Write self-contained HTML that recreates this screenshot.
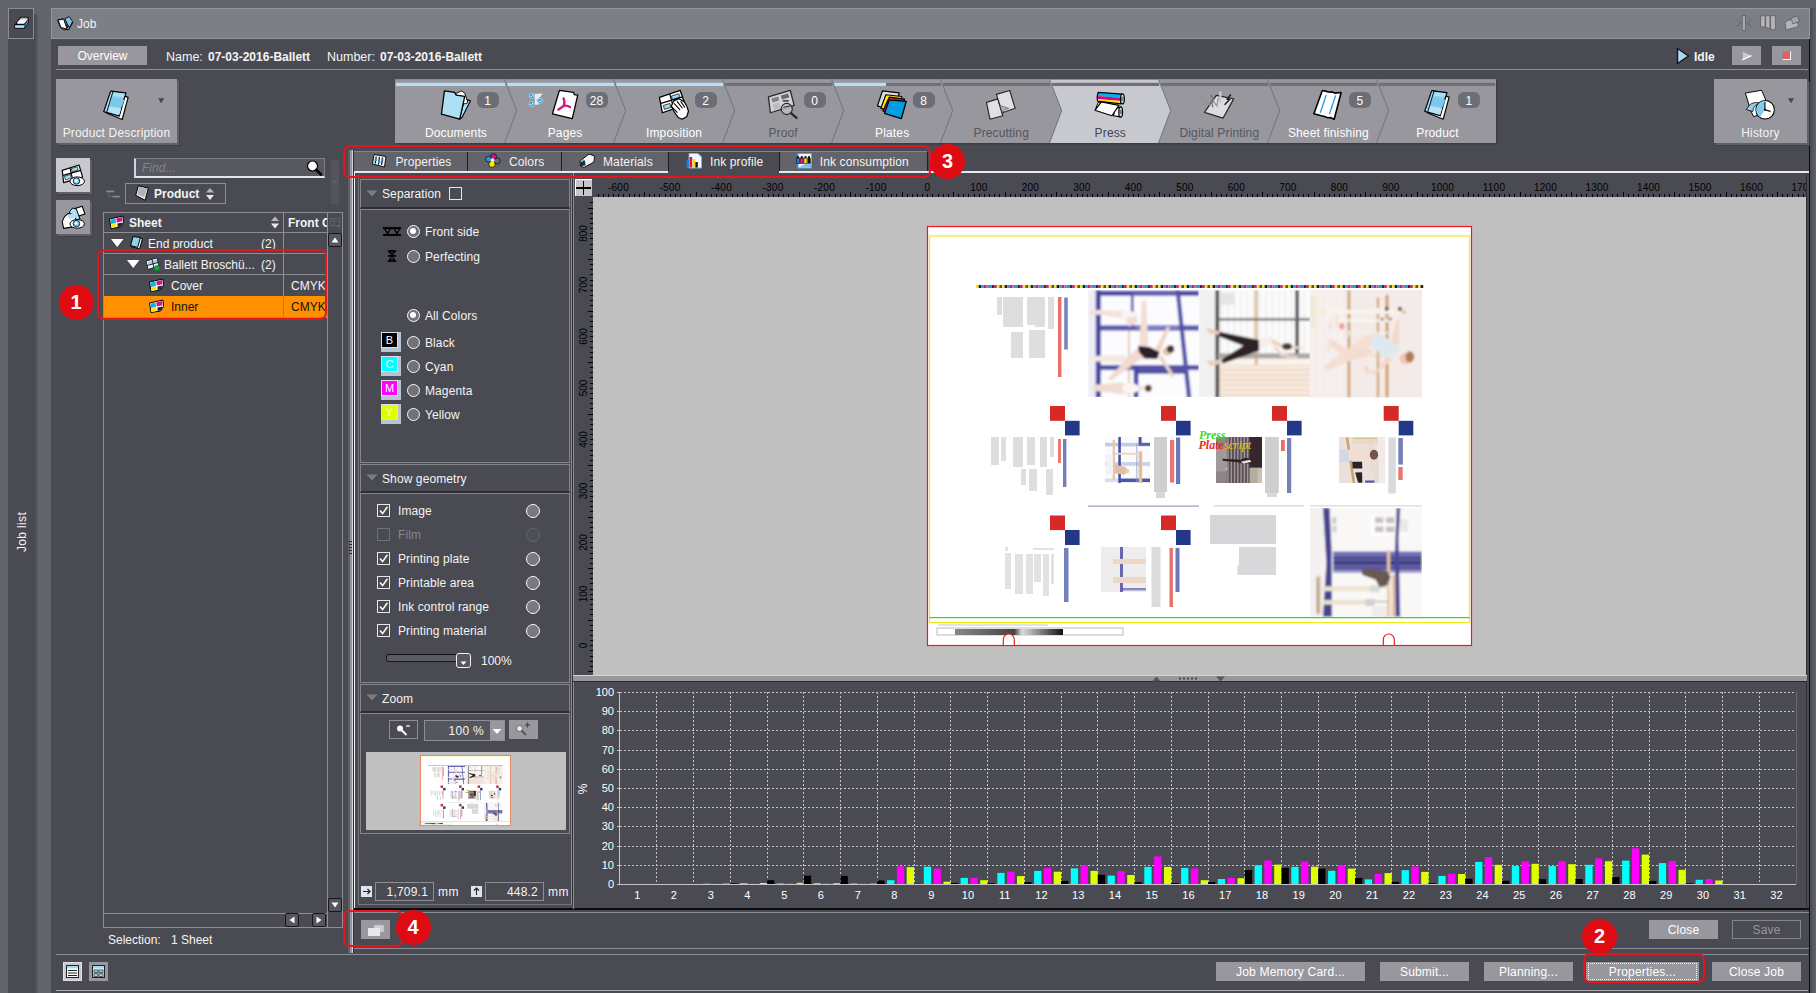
<!DOCTYPE html><html><head><meta charset="utf-8"><title>Job</title><style>
*{box-sizing:border-box;margin:0;padding:0}
html,body{width:1816px;height:993px;overflow:hidden;background:#62636b;font-family:"Liberation Sans",sans-serif;font-size:12px;color:#f4f4f4}
.a{position:absolute}
.t{position:absolute;white-space:nowrap;line-height:14px}
.btn{position:absolute;background:#97979d;color:#fff;text-align:center;white-space:nowrap}
.hl{position:absolute;height:1px;background:#8d8e95}
.vl{position:absolute;width:1px;background:#8d8e95}
.b{font-weight:bold}
.red{position:absolute;border:2px solid #e8141c;border-radius:7px}
.num{position:absolute;width:35px;height:35px;border-radius:18px;background:#e00a12;color:#fff;font-weight:bold;font-size:20px;line-height:35px;text-align:center}
.rad{position:absolute;width:13.4px;height:13.4px;border-radius:7px;border:1.7px solid #fafafa;background:#71727a}
.rad.on:after{content:"";position:absolute;left:2.3px;top:2.3px;width:5.4px;height:5.4px;border-radius:3px;background:#fff}
.cb{position:absolute;width:13px;height:13px;border:1px solid #e8e8ea;background:#4a4a53}
.circ{position:absolute;width:14px;height:14px;border-radius:7px;border:1.7px solid #fafafa;background:#777880}
.hdr{position:absolute;background:#4a4a53;border:1px solid #8d8e95;border-bottom:2px solid #33333a}
.pnl{position:absolute;border:1px solid #8d8e95}
.sh{box-shadow:2px 2px 0 0 #5f6068, 3px 3px 0 0 #3f3f46}
</style></head><body>
<div class="a" style="left:8px;top:8px;width:26px;height:985px;background:#4a4a53"></div>
<div class="a" style="left:34px;top:14px;width:5px;height:979px;background:linear-gradient(90deg,#45464e,#62636b)"></div>
<div class="a" style="left:8px;top:8px;width:26px;height:31px;border:1px solid #8d8e95"></div>
<div class="a" style="left:15px;top:551.5px;width:0;height:0"><div style="position:absolute;left:0;top:0;transform:rotate(-90deg);transform-origin:0 0;white-space:nowrap;line-height:14px;letter-spacing:.35px">Job list</div></div>
<div class="a" style="left:51px;top:8px;width:1759px;height:985px;background:#4a4a53"></div>
<div class="a" style="left:51px;top:8px;width:1759px;height:31px;background:#7d7f87;border:1px solid #96979e"></div>
<div class="a" style="left:1809px;top:39px;width:1.5px;height:954px;background:#0c0c0e"></div>
<div class="a" style="left:1810px;top:8px;width:6px;height:985px;background:linear-gradient(90deg,#4a4b52,#62636b)"></div>
<div class="t" style="left:77px;top:17px">Job</div>
<div class="btn" style="left:58px;top:46px;width:89px;height:19px;line-height:21px">Overview</div>
<div class="t" style="left:166px;top:50px;font-size:12.5px">Name:</div><div class="t b" style="left:208px;top:50px">07-03-2016-Ballett</div>
<div class="t" style="left:327px;top:50px;font-size:12.5px">Number:</div><div class="t b" style="left:380px;top:50px">07-03-2016-Ballett</div>
<div class="hl" style="left:56px;top:69px;width:1752px"></div>
<svg class="a" style="left:1676px;top:47px" width="14" height="18"><path d="M1.5 1.5 L12.5 9 L1.5 16.5 Z" fill="#a8d8f0" stroke="#111" stroke-width="1.3"/></svg>
<div class="t b" style="left:1694px;top:50px">Idle</div>
<div class="btn" style="left:1732px;top:46px;width:29px;height:19px"></div>
<svg class="a" style="left:1741px;top:50px" width="12" height="12"><path d="M1.8 1.8 L10.2 5.6 L1.8 9.6 Z" fill="#c4c8dc"/><path d="M1.2 10 L10.4 5.6" stroke="#fff" stroke-width="1.2"/></svg>
<div class="btn" style="left:1772px;top:46px;width:29px;height:19px"></div>
<div class="a" style="left:1782px;top:51px;width:9px;height:9px;background:#e06064;border-top:1px solid #8a8b92;border-left:1px solid #8a8b92;border-right:1px solid #fff;border-bottom:1px solid #fff"></div>
<div class="a" style="left:395px;top:79px;width:1100.5px;height:64px;background:#97979d;box-shadow:1.5px 1.5px 0 0 #3c3d44"></div>
<div class="a" style="left:395px;top:79px;width:1101px;height:1px;background:#8a8d96"></div>
<svg class="a" style="left:0;top:0" width="1816" height="170" viewBox="0 0 1816 170"><polygon points="1049.7,80 1061.7,110.5 1049.7,143 1158.7,143 1170.7,110.5 1158.7,80" fill="#c8c9ce"/><rect x="396" y="82.8" width="109.2" height="3.2" fill="#b4e0f5"/><rect x="507.2" y="82.8" width="107" height="3.2" fill="#b4e0f5"/><rect x="616.2" y="82.8" width="107" height="3.2" fill="#b4e0f5"/><rect x="725.2" y="82.8" width="107" height="3.2" fill="#707178"/><rect x="834.2" y="82.8" width="107" height="3.2" fill="#b4e0f5"/><rect x="886" y="82.8" width="55.2" height="3.2" fill="#707178"/><rect x="943.2" y="82.8" width="107" height="3.2" fill="#707178"/><rect x="1052.2" y="82.8" width="107" height="3.2" fill="#707178"/><rect x="1161.2" y="82.8" width="107" height="3.2" fill="#707178"/><rect x="1270.2" y="82.8" width="107" height="3.2" fill="#707178"/><rect x="1379.2" y="82.8" width="115.8" height="3.2" fill="#707178"/><polyline points="504.5,79.5 516.7,110.5 504.5,143" fill="none" stroke="#6a7584" stroke-width="1"/><polyline points="613.5,79.5 625.7,110.5 613.5,143" fill="none" stroke="#6a7584" stroke-width="1"/><polyline points="722.5,79.5 734.7,110.5 722.5,143" fill="none" stroke="#6a7584" stroke-width="1"/><polyline points="831.5,79.5 843.7,110.5 831.5,143" fill="none" stroke="#6a7584" stroke-width="1"/><polyline points="940.5,79.5 952.7,110.5 940.5,143" fill="none" stroke="#6a7584" stroke-width="1"/><polyline points="1049.5,79.5 1061.7,110.5 1049.5,143" fill="none" stroke="#6a7584" stroke-width="1"/><polyline points="1158.5,79.5 1170.7,110.5 1158.5,143" fill="none" stroke="#6a7584" stroke-width="1"/><polyline points="1267.5,79.5 1279.7,110.5 1267.5,143" fill="none" stroke="#6a7584" stroke-width="1"/><polyline points="1376.5,79.5 1388.7,110.5 1376.5,143" fill="none" stroke="#6a7584" stroke-width="1"/><g transform="translate(435 86) scale(0.099108)"><polygon points="300,130 358,150 272,318 245,335" fill="#aee0f5" stroke="#000" stroke-width="11" stroke-linejoin="round" /><polygon points="205,78 268,50 300,72 332,168 300,182" fill="#fff" stroke="#000" stroke-width="9" stroke-linejoin="round" /><polygon points="95,50 198,64 214,92 300,105 250,335 65,285" fill="#aee0f5" stroke="#000" stroke-width="13" stroke-linejoin="round" /><polygon points="1005,80 1085,75 1052,122 1022,142 1052,186 1008,190" fill="#e4f0f8" stroke="none" stroke-width="0" stroke-linejoin="round" /><circle cx="975" cy="100" r="25" fill="#1f9ae0" stroke="#d8ecf8" stroke-width="6"/><polyline points="963,100 972,110 988,88" fill="none" stroke="#fff" stroke-width="9"/><circle cx="1062" cy="150" r="25" fill="#1f9ae0" stroke="#d8ecf8" stroke-width="6"/><polyline points="1050,150 1059,160 1075,138" fill="none" stroke="#fff" stroke-width="9"/><circle cx="975" cy="182" r="25" fill="#1f9ae0" stroke="#d8ecf8" stroke-width="6"/><polyline points="963,182 972,192 988,170" fill="none" stroke="#fff" stroke-width="9"/><polygon points="1255,45 1398,64 1404,86 1440,92 1385,330 1185,280" fill="#fff" stroke="#000" stroke-width="13" stroke-linejoin="round" /><path d="M1300 200 C1310 170 1305 140 1298 125 M1300 200 C1280 215 1260 228 1245 238 M1300 200 C1325 195 1345 200 1362 212" fill="none" stroke="#d4148c" stroke-width="24" stroke-linecap="round"/></g><g transform="translate(650 86) scale(0.099108)"><polygon points="95,115 305,45 355,190 125,270" fill="#fff" stroke="#000" stroke-width="13" stroke-linejoin="round" /><polygon points="215,102 290,78 302,112 226,136" fill="#9ddcf5" stroke="#000" stroke-width="7" stroke-linejoin="round" /><polygon points="135,196 202,176 212,216 146,236" fill="#9ddcf5" stroke="#000" stroke-width="7" stroke-linejoin="round" /><polyline points="200,82 240,230" fill="none" stroke="#000" stroke-width="12"/><polyline points="110,175 330,110" fill="none" stroke="#000" stroke-width="12"/><path d="M215 205 L240 150 L292 128 L345 158 L372 205 L388 255 L372 308 L325 335 L285 318 L245 262 Z" fill="#fff" stroke="#000" stroke-width="12" stroke-linejoin="round"/><path d="M225 215 L275 265 M245 178 L300 238 M275 158 L325 222 M312 158 L350 215" fill="none" stroke="#000" stroke-width="11" stroke-linecap="round"/><polygon points="1195,110 1415,45 1455,195 1215,270" fill="#d4d4d7" stroke="#2a2a2e" stroke-width="13" stroke-linejoin="round" /><polygon points="1225,126 1295,106 1304,146 1236,166" fill="#808086" stroke="none" stroke-width="0" stroke-linejoin="round" /><polygon points="1320,96 1395,76 1405,116 1330,136" fill="#6a6a70" stroke="none" stroke-width="0" stroke-linejoin="round" /><polygon points="1238,185 1305,165 1315,225 1250,245" fill="#bcbcc0" stroke="none" stroke-width="0" stroke-linejoin="round" /><line x1="1420" y1="272" x2="1478" y2="322" stroke="#2a2a2e" stroke-width="24" stroke-linecap="round"/><circle cx="1380" cy="232" r="56" fill="#c4c4c8" fill-opacity="0.75" stroke="#2a2a2e" stroke-width="12"/><line x1="1345" y1="215" x2="1415" y2="200" stroke="#2a2a2e" stroke-width="10"/><line x1="1340" y1="150" x2="1400" y2="150" stroke="#2a2a2e" stroke-width="14"/></g><g transform="translate(870 86) scale(0.099108)"><polygon points="125,50 295,70 252,262 75,200" fill="#dcdcde" stroke="#000" stroke-width="12" stroke-linejoin="round" /><polygon points="160,88 322,106 285,282 110,226" fill="#ffee00" stroke="#000" stroke-width="12" stroke-linejoin="round" /><polygon points="195,112 348,132 310,302 130,252" fill="#d4148c" stroke="#000" stroke-width="12" stroke-linejoin="round" /><polygon points="195,140 365,156 316,330 146,276" fill="#00a0e0" stroke="#000" stroke-width="13" stroke-linejoin="round" /><polygon points="1175,165 1290,130 1340,300 1210,335" fill="#e0e0e3" stroke="#2a2a2e" stroke-width="12" stroke-linejoin="round" /><polygon points="1275,85 1410,45 1465,225 1335,270" fill="#e0e0e3" stroke="#2a2a2e" stroke-width="12" stroke-linejoin="round" /><polygon points="1312,198 1400,226 1355,240 1338,272" fill="#b8b8bc" stroke="#444" stroke-width="6" stroke-linejoin="round" /></g><g transform="translate(1085 86) scale(0.099108)"><polygon points="300,232 358,212 358,312 288,300" fill="#fff" stroke="#000" stroke-width="12" stroke-linejoin="round" /><ellipse cx="360" cy="262" rx="19" ry="52" fill="#bfe4f5" stroke="#000" stroke-width="12"/><ellipse cx="360" cy="262" rx="6" ry="20" fill="#fff" stroke="#000" stroke-width="6"/><polygon points="132,168 165,158 135,215 108,228" fill="#fff" stroke="#000" stroke-width="10" stroke-linejoin="round" /><polygon points="165,160 342,196 272,300 100,245" fill="#fff" stroke="#000" stroke-width="12" stroke-linejoin="round" /><polygon points="132,66 372,84 368,122 126,100" fill="#00b4f0" stroke="none" stroke-width="0" stroke-linejoin="round" /><polygon points="126,100 368,122 364,152 122,130" fill="#e0008c" stroke="none" stroke-width="0" stroke-linejoin="round" /><polygon points="122,130 364,152 360,178 128,152" fill="#ffe800" stroke="none" stroke-width="0" stroke-linejoin="round" /><path d="M132 64 L376 82 L362 180 L126 152 Q116 108 132 64 Z" fill="none" stroke="#000" stroke-width="12" stroke-linejoin="round"/><ellipse cx="378" cy="130" rx="19" ry="50" fill="#bfe4f5" stroke="#000" stroke-width="12"/><ellipse cx="378" cy="130" rx="6" ry="20" fill="#fff" stroke="#000" stroke-width="6"/><polygon points="1325,95 1500,130 1392,325 1205,265" fill="#dcdcdf" stroke="#2a2a2e" stroke-width="13" stroke-linejoin="round" /><polygon points="1350,55 1382,55 1372,175 1360,175" fill="#c4c4c8" stroke="none" stroke-width="0" stroke-linejoin="round" /><polyline points="1268,85 1295,140 1275,150 1290,215" fill="none" stroke="#77777d" stroke-width="14"/><polyline points="1205,155 1260,190 1300,160 1330,200 1345,120" fill="none" stroke="#909096" stroke-width="12"/><polyline points="1472,85 1435,132 1458,138 1408,190" fill="none" stroke="#1e1e22" stroke-width="15"/></g><g transform="translate(1300 86) scale(0.099108)"><polygon points="225,45 262,52 285,60 330,62 350,72 415,65 345,335 305,318 280,320 240,305 215,300 140,280" fill="#fff" stroke="#000" stroke-width="16" stroke-linejoin="round" /><line x1="265" y1="90" x2="205" y2="270" stroke="#1a9be0" stroke-width="13"/><line x1="360" y1="95" x2="296" y2="285" stroke="#1a9be0" stroke-width="13"/><polygon points="1345,60 1505,112 1445,335 1290,272" fill="#fff" stroke="#000" stroke-width="12" stroke-linejoin="round" /><polygon points="1330,48 1482,66 1415,300 1260,255" fill="#86cdee" stroke="#000" stroke-width="13" stroke-linejoin="round" /><polygon points="1343,120 1466,138 1440,215 1318,196" fill="#7ac8ec" stroke="none" stroke-width="0" stroke-linejoin="round" /><polygon points="1360,62 1472,74 1462,112 1350,98" fill="#aadff5" stroke="none" stroke-width="0" stroke-linejoin="round" /><polygon points="1316,205 1436,225 1415,290 1296,258" fill="#b4e3f7" stroke="none" stroke-width="0" stroke-linejoin="round" /><polygon points="1330,48 1352,52 1288,263 1260,255" fill="#a4daf3" stroke="#000" stroke-width="9" stroke-linejoin="round" /></g></svg>
<div class="t" style="left:386px;top:126px;width:140px;text-align:center;color:#fff;letter-spacing:.15px">Documents</div>
<div class="a" style="left:476.5px;top:92px;width:22px;height:16px;border-radius:6px;background:#6d6e75;color:#fff;text-align:center;line-height:18px">1</div>
<div class="t" style="left:495.05px;top:126px;width:140px;text-align:center;color:#fff;letter-spacing:.15px">Pages</div>
<div class="a" style="left:585.55px;top:92px;width:22px;height:16px;border-radius:6px;background:#6d6e75;color:#fff;text-align:center;line-height:18px">28</div>
<div class="t" style="left:604.1px;top:126px;width:140px;text-align:center;color:#fff;letter-spacing:.15px">Imposition</div>
<div class="a" style="left:694.6px;top:92px;width:22px;height:16px;border-radius:6px;background:#6d6e75;color:#fff;text-align:center;line-height:18px">2</div>
<div class="t" style="left:713.15px;top:126px;width:140px;text-align:center;color:#55565e;letter-spacing:.15px">Proof</div>
<div class="a" style="left:803.65px;top:92px;width:22px;height:16px;border-radius:6px;background:#6d6e75;color:#fff;text-align:center;line-height:18px">0</div>
<div class="t" style="left:822.2px;top:126px;width:140px;text-align:center;color:#fff;letter-spacing:.15px">Plates</div>
<div class="a" style="left:912.7px;top:92px;width:22px;height:16px;border-radius:6px;background:#6d6e75;color:#fff;text-align:center;line-height:18px">8</div>
<div class="t" style="left:931.25px;top:126px;width:140px;text-align:center;color:#55565e;letter-spacing:.15px">Precutting</div>
<div class="t" style="left:1040.3px;top:126px;width:140px;text-align:center;color:#45464e;letter-spacing:.15px">Press</div>
<div class="t" style="left:1149.35px;top:126px;width:140px;text-align:center;color:#55565e;letter-spacing:.15px">Digital Printing</div>
<div class="t" style="left:1258.4px;top:126px;width:140px;text-align:center;color:#fff;letter-spacing:.15px">Sheet finishing</div>
<div class="a" style="left:1348.9px;top:92px;width:22px;height:16px;border-radius:6px;background:#6d6e75;color:#fff;text-align:center;line-height:18px">5</div>
<div class="t" style="left:1367.45px;top:126px;width:140px;text-align:center;color:#fff;letter-spacing:.15px">Product</div>
<div class="a" style="left:1457.95px;top:92px;width:22px;height:16px;border-radius:6px;background:#6d6e75;color:#fff;text-align:center;line-height:18px">1</div>
<div class="a sh" style="left:56px;top:79px;width:121px;height:64px;background:#97979d"></div>
<div class="t" style="left:56px;top:126px;width:121px;text-align:center;letter-spacing:.15px">Product Description</div>
<svg class="a" style="left:0;top:70px" width="400" height="80" viewBox="0 70 400 80"><g transform="translate(-1321 0.3)"><g transform="translate(1300 86) scale(0.099108)"><polygon points="1345,60 1505,112 1445,335 1290,272" fill="#fff" stroke="#000" stroke-width="12" stroke-linejoin="round" /><polygon points="1330,48 1482,66 1415,300 1260,255" fill="#86cdee" stroke="#000" stroke-width="13" stroke-linejoin="round" /><polygon points="1343,120 1466,138 1440,215 1318,196" fill="#7ac8ec" stroke="none" stroke-width="0" stroke-linejoin="round" /><polygon points="1360,62 1472,74 1462,112 1350,98" fill="#aadff5" stroke="none" stroke-width="0" stroke-linejoin="round" /><polygon points="1316,205 1436,225 1415,290 1296,258" fill="#b4e3f7" stroke="none" stroke-width="0" stroke-linejoin="round" /><polygon points="1330,48 1352,52 1288,263 1260,255" fill="#a4daf3" stroke="#000" stroke-width="9" stroke-linejoin="round" /></g></g><polygon points="158,98.3 164.4,98.3 161.2,103.2" fill="#45464e"/></svg>
<div class="a sh" style="left:1714px;top:79px;width:93px;height:64px;background:#97979d"></div>
<div class="t" style="left:1714px;top:126px;width:93px;text-align:center;letter-spacing:.15px">History</div>
<div class="a sh" style="left:56px;top:158px;width:34px;height:34px;background:#c8c9ce"></div>
<div class="a sh" style="left:56px;top:200px;width:34px;height:34px;background:#97979d"></div>
<svg class="a" style="left:0;top:150px" width="360" height="180" viewBox="0 150 360 180"><g transform="translate(50 150) scale(0.0906372)"><polygon points="135,225 320,165 360,300 150,360" fill="#fff" stroke="#000" stroke-width="13" stroke-linejoin="round" /><polygon points="235,205 300,185 310,220 245,240" fill="#9ddcf5" stroke="#000" stroke-width="7" stroke-linejoin="round" /><polygon points="160,290 225,270 235,310 170,330" fill="#9ddcf5" stroke="#000" stroke-width="7" stroke-linejoin="round" /><line x1="220" y1="195" x2="252" y2="335" stroke="#000" stroke-width="12"/><line x1="145" y1="280" x2="340" y2="225" stroke="#000" stroke-width="12"/><ellipse cx="300" cy="345" rx="80" ry="48" fill="#fff" stroke="#000" stroke-width="11"/><circle cx="292" cy="342" r="36" fill="#7fd0f0" stroke="#000" stroke-width="9"/><circle cx="288" cy="338" r="14" fill="#fff"/><polygon points="245,655 355,620 385,705 280,740" fill="#fff" stroke="#000" stroke-width="12" stroke-linejoin="round" /><polygon points="215,680 250,640 290,650 330,760 240,790" fill="#aee0f5" stroke="#000" stroke-width="11" stroke-linejoin="round" /><polygon points="160,735 200,700 270,715 310,840 150,865 135,790" fill="#fff" stroke="#000" stroke-width="12" stroke-linejoin="round" /><polygon points="190,725 275,690 300,745 215,760" fill="#aee0f5" stroke="none" stroke-width="0" stroke-linejoin="round" /><ellipse cx="300" cy="815" rx="80" ry="48" fill="#fff" stroke="#000" stroke-width="11"/><circle cx="292" cy="812" r="36" fill="#7fd0f0" stroke="#000" stroke-width="9"/><circle cx="288" cy="808" r="14" fill="#fff"/><rect x="620" y="448" width="88" height="18" fill="#8a8b92"/><rect x="690" y="505" width="82" height="18" fill="#8a8b92"/><polyline points="645,470 645,512 685,512" fill="none" stroke="#6a6b72" stroke-width="9"/><polygon points="975,395 1085,420 1050,555 945,500" fill="#e8e8ea" stroke="#000" stroke-width="11" stroke-linejoin="round" /><polygon points="985,405 1070,425 1040,520 965,490" fill="#b4b4b8" stroke="none" stroke-width="0" stroke-linejoin="round" /></g></svg>
<div class="a" style="left:134px;top:158px;width:191px;height:20px;background:#575860;border:1px solid #7d7e86;border-left:2px solid #c9d6ea;border-bottom:2px solid #dfe6f2"></div>
<div class="t" style="left:142px;top:161px;color:#83848b;font-style:italic;font-size:12px">Find...</div>
<svg class="a" style="left:304px;top:159px" width="20" height="18"><circle cx="8.5" cy="7" r="5" fill="#fff" stroke="#000" stroke-width="1.2"/><line x1="12.5" y1="11" x2="17" y2="15.5" stroke="#000" stroke-width="2.6" stroke-linecap="round"/></svg>
<div class="a" style="left:331px;top:160px;width:8px;height:44px;background:#53545c"></div>
<div class="a" style="left:333px;top:181px;width:5px;height:1px;border-top:1px dotted #70717a"></div>
<div class="a" style="left:125px;top:183px;width:101px;height:21px;border:1px solid #8d8e95"></div>
<div class="t b" style="left:154px;top:187px">Product</div>
<svg class="a" style="left:204px;top:187px" width="12" height="14"><polygon points="2,5.5 10,5.5 6,1" fill="#b8b8bc"/><polygon points="2,8 10,8 6,13" fill="#e8e8ea"/></svg>
<div class="a" style="left:103px;top:212px;width:240px;height:716px;border:1px solid #8d8e95"></div>
<div class="hl" style="left:104px;top:232px;width:223px"></div>
<div class="hl" style="left:104px;top:253px;width:223px"></div>
<div class="hl" style="left:104px;top:274px;width:223px"></div>

<div class="a" style="left:104px;top:295.5px;width:223px;height:21px;background:#ff9000"></div>
<div class="hl" style="left:104px;top:316.5px;width:223px"></div>
<div class="vl" style="left:283px;top:213px;height:104px"></div>
<div class="vl" style="left:327px;top:213px;height:714px"></div>
<div class="a" style="left:283px;top:297px;width:1px;height:20px;background:#c87810"></div>
<div class="t b" style="left:129px;top:216px">Sheet</div>
<div class="t b" style="left:288px;top:216px;width:39px;overflow:hidden">Front C</div>
<svg class="a" style="left:269px;top:215px" width="12" height="15"><polygon points="2,6 10,6 6,1.5" fill="#b8b8bc"/><polygon points="2,8.5 10,8.5 6,13.5" fill="#e8e8ea"/></svg>
<div class="t" style="left:148px;top:237px">End product</div><div class="t" style="left:261px;top:237px">(2)</div>
<div class="t" style="left:164px;top:258px">Ballett Brosch&uuml;...</div><div class="t" style="left:261px;top:258px">(2)</div>
<div class="t" style="left:171px;top:279px">Cover</div><div class="t" style="left:291px;top:279px;width:36px;overflow:hidden">CMYK</div>
<div class="t" style="left:171px;top:300px;color:#111">Inner</div><div class="t" style="left:291px;top:300px;width:36px;overflow:hidden;color:#111">CMYK</div>
<svg class="a" style="left:0;top:205px" width="360" height="125" viewBox="0 205 360 125"><g transform="translate(108.5 215.5)"><polygon points="1,3.5 14.5,0.5 15,7 12,11.5 2.5,13" fill="#fff" stroke="#000" stroke-width="1"/><polygon points="2,4.2 7,3.1 7.5,7.5 2.5,8.4" fill="#10b0f0"/><polygon points="7.8,2.9 13.6,1.6 13.9,5.8 8.3,7" fill="#d4148c"/><polygon points="2.6,9 7.6,8 8,11.6 3,12.4" fill="#ffe800"/><polygon points="9,8 14.4,7 11.8,11 9.2,11.4" fill="#222"/></g><g transform="translate(148.5 278.5)"><polygon points="1,3.5 14.5,0.5 15,7 12,11.5 2.5,13" fill="#fff" stroke="#000" stroke-width="1"/><polygon points="2,4.2 7,3.1 7.5,7.5 2.5,8.4" fill="#10b0f0"/><polygon points="7.8,2.9 13.6,1.6 13.9,5.8 8.3,7" fill="#d4148c"/><polygon points="2.6,9 7.6,8 8,11.6 3,12.4" fill="#ffe800"/><polygon points="9,8 14.4,7 11.8,11 9.2,11.4" fill="#222"/></g><g transform="translate(148.5 299.5)"><polygon points="1,3.5 14.5,0.5 15,7 12,11.5 2.5,13" fill="#fff" stroke="#000" stroke-width="1"/><polygon points="2,4.2 7,3.1 7.5,7.5 2.5,8.4" fill="#10b0f0"/><polygon points="7.8,2.9 13.6,1.6 13.9,5.8 8.3,7" fill="#d4148c"/><polygon points="2.6,9 7.6,8 8,11.6 3,12.4" fill="#ffe800"/><polygon points="9,8 14.4,7 11.8,11 9.2,11.4" fill="#222"/></g><polygon points="111,239 123.5,239 117.2,247" fill="#fff"/><polygon points="127,260 139.5,260 133.2,268" fill="#fff"/><g transform="translate(130 236)"><polygon points="4,1 12.5,2.5 9.5,13 1,10.5" fill="#fff" stroke="#000" stroke-width="1"/><polygon points="3,0.5 10.5,1.5 7.6,11.5 0.6,9.5" fill="#8fd0ee" stroke="#000" stroke-width="1"/></g><g transform="translate(145 257)"><polygon points="1,4 12,0.8 14,9 3,12.5" fill="#e8f4fa" stroke="#222" stroke-width="1"/><polygon points="3,5 6.5,4 7.2,6.6 3.7,7.6" fill="#8fd0ee"/><polygon points="8,3.4 11.4,2.4 12,5 8.7,6" fill="#8fd0ee"/><line x1="2" y1="8.5" x2="13" y2="5.5" stroke="#222" stroke-width="1"/><line x1="7" y1="2.5" x2="9" y2="11" stroke="#222" stroke-width="1"/><circle cx="12" cy="11" r="2.6" fill="#1fa040" stroke="#083" stroke-width=".6"/></g></svg>
<div class="a" style="left:328px;top:213px;width:14px;height:19px"></div>
<svg class="a" style="left:329px;top:217px" width="13" height="12"><rect x="1.5" y="1.5" width="9" height="7" fill="none" stroke="#60616a" stroke-width="1"/><line x1="1.5" y1="4" x2="10.5" y2="4" stroke="#60616a"/><line x1="5" y1="1.5" x2="5" y2="8.5" stroke="#60616a"/><polygon points="7,8 12,8 9.5,11" fill="#60616a"/></svg>
<div class="a" style="left:328px;top:233px;width:14px;height:14px;background:#55565e;border:1px solid #17171b;border-radius:2px"></div><svg class="a" style="left:328px;top:233px" width="14" height="14"><polygon points="3.5,9.5 10.5,9.5 7,4.5" fill="#fff"/></svg>
<div class="a" style="left:328px;top:898px;width:14px;height:14px;background:#55565e;border:1px solid #17171b;border-radius:2px"></div><svg class="a" style="left:328px;top:898px" width="14" height="14"><polygon points="3.5,4.5 10.5,4.5 7,9.5" fill="#fff"/></svg>
<div class="hl" style="left:104px;top:913px;width:223px"></div>
<div class="a" style="left:285px;top:913px;width:14px;height:14px;background:#55565e;border:1px solid #17171b;border-radius:2px"></div><svg class="a" style="left:285px;top:913px" width="14" height="14"><polygon points="9.5,3.5 9.5,10.5 4.5,7" fill="#fff"/></svg>
<div class="a" style="left:312px;top:913px;width:14px;height:14px;background:#55565e;border:1px solid #17171b;border-radius:2px"></div><svg class="a" style="left:312px;top:913px" width="14" height="14"><polygon points="4.5,3.5 4.5,10.5 9.5,7" fill="#fff"/></svg>
<div class="t" style="left:108px;top:933px">Selection:</div><div class="t" style="left:171px;top:933px">1 Sheet</div>
<div class="a" style="left:348px;top:150px;width:2px;height:803px;background:#5c5d65"></div>
<div class="a" style="left:350px;top:150px;width:2px;height:803px;background:#94959b"></div>
<div class="a" style="left:352px;top:150px;width:1px;height:803px;background:#d4d4d8"></div>
<div class="a" style="left:353px;top:150px;width:1px;height:803px;background:#2e2e34"></div>
<div class="a" style="left:349px;top:541px;width:3px;height:1px;background:#2a2a30"></div>
<div class="a" style="left:349px;top:544px;width:3px;height:1px;background:#2a2a30"></div>
<div class="a" style="left:349px;top:547px;width:3px;height:1px;background:#2a2a30"></div>
<div class="a" style="left:349px;top:550px;width:3px;height:1px;background:#2a2a30"></div>
<div class="a" style="left:349px;top:553px;width:3px;height:1px;background:#2a2a30"></div>
<div class="a" style="left:354px;top:151px;width:573px;height:21px;background:#62636b;border-top:1px solid #85868d"></div>
<div class="a" style="left:354px;top:171px;width:1455px;height:2px;background:#e9e9ec"></div>
<div class="a" style="left:668px;top:151px;width:111px;height:23px;background:#4a4a53;border-top:1px solid #85868d"></div>
<div class="a" style="left:467px;top:152px;width:1px;height:19px;background:#1d1d22"></div>
<div class="a" style="left:561px;top:152px;width:1px;height:19px;background:#1d1d22"></div>
<div class="a" style="left:668px;top:152px;width:1px;height:19px;background:#1d1d22"></div>
<div class="a" style="left:779px;top:152px;width:1px;height:19px;background:#1d1d22"></div>
<div class="a" style="left:927px;top:152px;width:1px;height:19px;background:#1d1d22"></div>
<div class="t" style="left:395.5px;top:155px;letter-spacing:.12px">Properties</div>
<div class="t" style="left:509px;top:155px;letter-spacing:.12px">Colors</div>
<div class="t" style="left:603px;top:155px;letter-spacing:.12px">Materials</div>
<div class="t" style="left:710px;top:155px;letter-spacing:.12px">Ink profile</div>
<div class="t" style="left:819.7px;top:155px;letter-spacing:.12px">Ink consumption</div>
<svg class="a" style="left:340px;top:140px" width="620" height="60" viewBox="340 140 620 60"><g transform="translate(372 153)"><polygon points="2,1.5 14,3.5 12.5,14 0.5,11" fill="#f4f4f4" stroke="#111" stroke-width="1"/><line x1="4.2" y1="3.5" x2="3.2" y2="10.5" stroke="#111" stroke-width="1.2"/><line x1="7.4" y1="4" x2="6.4" y2="11.5" stroke="#111" stroke-width="1.2"/><line x1="10.6" y1="4.6" x2="9.6" y2="12" stroke="#111" stroke-width="1.2"/><rect x="2.6" y="6" width="2.4" height="2" fill="#1f9ae0"/><rect x="5.9" y="8" width="2.4" height="2" fill="#1f9ae0"/><rect x="9" y="5.6" width="2.4" height="2" fill="#1f9ae0"/></g><g transform="translate(485 153)"><circle cx="8.5" cy="3.6" r="3" fill="#d4148c" stroke="#111" stroke-width=".8"/><circle cx="3.6" cy="6.2" r="3" fill="#1f9ae0" stroke="#111" stroke-width=".8"/><circle cx="12.2" cy="8" r="3" fill="#6a6a70" stroke="#111" stroke-width=".8"/><circle cx="7" cy="11.2" r="3.2" fill="#ffe800" stroke="#111" stroke-width=".8"/><circle cx="7.6" cy="7.2" r="2" fill="#e8e8ea"/></g><g transform="translate(579 153)"><polygon points="1,8 10,1 15.5,3 15,9 5,14.5 1.5,13" fill="#f4f4f4" stroke="#111" stroke-width="1"/><polygon points="1.5,9 6,7.5 6.5,12.5 2,13" fill="#2a2a2e"/><line x1="3" y1="6.5" x2="6" y2="8" stroke="#1f9ae0" stroke-width="1.3"/></g><g transform="translate(686 153)"><polygon points="3,0.5 12,0.5 15.5,4 15.5,15 3,15" fill="#f4f8fc" stroke="#7ab8e8" stroke-width="1"/><rect x="0.5" y="7" width="2.6" height="7.5" fill="#1f7ae0"/><rect x="3.6" y="4" width="2.6" height="10.5" fill="#e0104a"/><rect x="6.7" y="6" width="2.6" height="8.5" fill="#ffd800"/><rect x="9.4" y="9" width="2.4" height="5.5" fill="#111"/></g><g transform="translate(796 153)"><rect x="2" y="0.5" width="13.5" height="14.5" fill="#e8f4fc" stroke="#5aa8e8" stroke-width="1"/><polygon points="2.5,14.5 15,8 15,14.5" fill="#7ac0f0"/><rect x="0.5" y="5" width="3.2" height="5.5" fill="#1f7ae0" stroke="#111" stroke-width=".6"/><rect x="4.2" y="5" width="3.2" height="5.5" fill="#e010a0" stroke="#111" stroke-width=".6"/><rect x="7.9" y="5" width="3.2" height="5.5" fill="#ffe000" stroke="#111" stroke-width=".6"/><rect x="11.6" y="5" width="3" height="5.5" fill="#111"/><rect x="1" y="3.2" width="2" height="2" fill="#111"/><rect x="4.8" y="3.2" width="2" height="2" fill="#111"/><rect x="8.5" y="3.2" width="2" height="2" fill="#111"/><rect x="12" y="3.2" width="2" height="2" fill="#111"/></g></svg>
<div class="a" style="left:358px;top:175px;width:214px;height:730px;border-left:1px solid #75767d;border-right:1px solid #8d8e95;border-bottom:1px solid #75767d"></div>
<div class="a" style="left:354px;top:173px;width:1px;height:736px;background:#f0f0f2"></div>
<div class="a" style="left:354px;top:908px;width:1455px;height:1.5px;background:#0c0c0e"></div>
<div class="a" style="left:572px;top:175px;width:1px;height:730px;background:#2e2e34"></div>
<div class="a" style="left:360px;top:179px;width:210px;height:30px;border:1px solid #85868d;border-bottom:2px solid #2c2c32"></div>
<svg class="a" style="left:366px;top:190px" width="12" height="8"><polygon points="0.5,0.5 11.5,0.5 6,6.5" fill="#7b7c84"/></svg>
<div class="t" style="left:382px;top:187px;letter-spacing:.1px">Separation</div>
<div class="cb" style="left:449px;top:187px"></div>
<div class="a" style="left:360px;top:209px;width:210px;height:254px;border:1px solid #85868d"></div>
<svg class="a" style="left:370px;top:215px" width="110" height="55" viewBox="370 215 110 55"><g transform="translate(370 215) scale(0.0605694)"><g fill="#020203"><rect x="215" y="200" width="297" height="36"/><rect x="215" y="314" width="297" height="32"/><polygon points="232,235 345,235 302,300 276,300"/><polygon points="390,235 500,235 457,300 431,300"/><rect x="274" y="290" width="32" height="30"/><rect x="429" y="290" width="32" height="30"/><rect x="295" y="580" width="137" height="30"/><rect x="295" y="662" width="137" height="28"/><rect x="295" y="745" width="137" height="30"/><polygon points="305,610 422,610 376,665 351,665"/><polygon points="351,690 376,690 422,745 305,745"/></g><polygon points="264,242 313,242 289,272" fill="#85868d"/><polygon points="420,242 470,242 445,272" fill="#85868d"/><polygon points="346,730 381,730 364,706" fill="#85868d"/><polygon points="340,614 388,614 364,642" fill="#3a3a40"/></g></svg>
<div class="rad on" style="left:407px;top:225px"></div>
<div class="t" style="left:425px;top:224.5px;letter-spacing:.1px">Front side</div>
<div class="rad" style="left:407px;top:250px"></div>
<div class="t" style="left:425px;top:249.5px;letter-spacing:.1px">Perfecting</div>
<div class="rad on" style="left:407px;top:309px"></div>
<div class="t" style="left:425px;top:308.5px;letter-spacing:.1px">All Colors</div>
<div class="rad" style="left:407px;top:336px"></div>
<div class="t" style="left:425px;top:335.5px;letter-spacing:.1px">Black</div>
<div class="rad" style="left:407px;top:360px"></div>
<div class="t" style="left:425px;top:359.5px;letter-spacing:.1px">Cyan</div>
<div class="rad" style="left:407px;top:384px"></div>
<div class="t" style="left:425px;top:383.5px;letter-spacing:.1px">Magenta</div>
<div class="rad" style="left:407px;top:408px"></div>
<div class="t" style="left:425px;top:407.5px;letter-spacing:.1px">Yellow</div>
<div class="a" style="left:381px;top:332px;width:20px;height:20px;background:#b9c3d6"></div>
<div class="a" style="left:381px;top:332px;width:17px;height:16px;background:#000;border:1px solid #d9dfec;color:#fff;font-size:11px;line-height:14px;text-align:center">B</div>
<div class="a" style="left:381px;top:356px;width:20px;height:20px;background:#b9c3d6"></div>
<div class="a" style="left:381px;top:356px;width:17px;height:16px;background:#00ffff;border:1px solid #d9dfec;color:#e8ffff;font-size:11px;line-height:14px;text-align:center">C</div>
<div class="a" style="left:381px;top:380px;width:20px;height:20px;background:#b9c3d6"></div>
<div class="a" style="left:381px;top:380px;width:17px;height:16px;background:#ff00ff;border:1px solid #d9dfec;color:#fff;font-size:11px;line-height:14px;text-align:center">M</div>
<div class="a" style="left:381px;top:404px;width:20px;height:20px;background:#b9c3d6"></div>
<div class="a" style="left:381px;top:404px;width:17px;height:16px;background:#dfff00;border:1px solid #d9dfec;color:#f8ffd0;font-size:11px;line-height:14px;text-align:center">Y</div>
<div class="a" style="left:360px;top:464px;width:210px;height:29px;border:1px solid #85868d;border-bottom:2px solid #2c2c32"></div>
<svg class="a" style="left:366px;top:474px" width="12" height="8"><polygon points="0.5,0.5 11.5,0.5 6,6.5" fill="#7b7c84"/></svg>
<div class="t" style="left:382px;top:472px;letter-spacing:.1px">Show geometry</div>
<div class="a" style="left:360px;top:493px;width:210px;height:190px;border:1px solid #85868d"></div>
<div class="cb" style="left:377px;top:504px;border-color:#e8e8ea"></div>
<svg class="a" style="left:377px;top:504px" width="13" height="13"><polyline points="3,6.5 5.6,9.6 10.4,2.8" fill="none" stroke="#fff" stroke-width="1.5"/></svg>
<div class="t" style="left:398px;top:503.5px;letter-spacing:.1px;color:#f4f4f4">Image</div>
<div class="circ" style="left:525.5px;top:503.5px"></div>
<div class="cb" style="left:377px;top:528px;border-color:#707179"></div>
<div class="t" style="left:398px;top:527.5px;letter-spacing:.1px;color:#85868d">Film</div>
<div class="circ" style="left:525.5px;top:527.5px;background:#4d4e56;border-color:#65666e"></div>
<div class="cb" style="left:377px;top:552px;border-color:#e8e8ea"></div>
<svg class="a" style="left:377px;top:552px" width="13" height="13"><polyline points="3,6.5 5.6,9.6 10.4,2.8" fill="none" stroke="#fff" stroke-width="1.5"/></svg>
<div class="t" style="left:398px;top:551.5px;letter-spacing:.1px;color:#f4f4f4">Printing plate</div>
<div class="circ" style="left:525.5px;top:551.5px"></div>
<div class="cb" style="left:377px;top:576px;border-color:#e8e8ea"></div>
<svg class="a" style="left:377px;top:576px" width="13" height="13"><polyline points="3,6.5 5.6,9.6 10.4,2.8" fill="none" stroke="#fff" stroke-width="1.5"/></svg>
<div class="t" style="left:398px;top:575.5px;letter-spacing:.1px;color:#f4f4f4">Printable area</div>
<div class="circ" style="left:525.5px;top:575.5px"></div>
<div class="cb" style="left:377px;top:600px;border-color:#e8e8ea"></div>
<svg class="a" style="left:377px;top:600px" width="13" height="13"><polyline points="3,6.5 5.6,9.6 10.4,2.8" fill="none" stroke="#fff" stroke-width="1.5"/></svg>
<div class="t" style="left:398px;top:599.5px;letter-spacing:.1px;color:#f4f4f4">Ink control range</div>
<div class="circ" style="left:525.5px;top:599.5px"></div>
<div class="cb" style="left:377px;top:624px;border-color:#e8e8ea"></div>
<svg class="a" style="left:377px;top:624px" width="13" height="13"><polyline points="3,6.5 5.6,9.6 10.4,2.8" fill="none" stroke="#fff" stroke-width="1.5"/></svg>
<div class="t" style="left:398px;top:623.5px;letter-spacing:.1px;color:#f4f4f4">Printing material</div>
<div class="circ" style="left:525.5px;top:623.5px"></div>
<div class="a" style="left:386px;top:654px;width:72px;height:8px;background:#5a5b63;border:1px solid #1a1a1e;border-radius:3px;border-top-color:#111"></div>
<div class="a" style="left:456px;top:653px;width:15px;height:15px;background:#55565e;border:1.5px solid #f2f2f2;border-radius:3px"></div>
<svg class="a" style="left:456px;top:653px" width="15" height="15"><polygon points="4.5,8.5 10.5,8.5 7.5,12" fill="#fff"/></svg>
<div class="t" style="left:481px;top:654px">100%</div>
<div class="a" style="left:360px;top:684px;width:210px;height:29px;border:1px solid #85868d;border-bottom:2px solid #2c2c32"></div>
<svg class="a" style="left:366px;top:694px" width="12" height="8"><polygon points="0.5,0.5 11.5,0.5 6,6.5" fill="#7b7c84"/></svg>
<div class="t" style="left:382px;top:692px;letter-spacing:.1px">Zoom</div>
<div class="a" style="left:360px;top:713px;width:210px;height:121px;border:1px solid #85868d"></div>
<div class="a" style="left:389px;top:720px;width:29px;height:19px;border:1px solid #8d8e95"></div>
<svg class="a" style="left:389px;top:720.5px" width="29" height="18"><circle cx="11" cy="7.5" r="3" fill="#fff"/><line x1="13" y1="9.5" x2="17.5" y2="14" stroke="#fff" stroke-width="2"/><line x1="17" y1="5" x2="21" y2="5" stroke="#fff" stroke-width="1.2"/></svg>
<div class="a" style="left:424px;top:720px;width:81px;height:21px;border:1px solid #8d8e95;background:#55565e"></div>
<div class="t" style="left:426px;top:724px;width:58px;text-align:right;letter-spacing:.3px">100 %</div>
<div class="a" style="left:490px;top:721px;width:14px;height:19px;background:#97979d"></div>
<svg class="a" style="left:490px;top:721px" width="14" height="19"><polygon points="2.5,8 11.5,8 7,13" fill="#fff"/></svg>
<div class="a" style="left:509px;top:720px;width:29px;height:19px;background:#97979d"></div>
<svg class="a" style="left:509px;top:720px" width="29" height="19"><circle cx="10.5" cy="8.5" r="3" fill="#e8e8ea" stroke="#55565e" stroke-width=".8"/><line x1="12.5" y1="10.5" x2="17" y2="15" stroke="#55565e" stroke-width="2"/><line x1="16" y1="5" x2="21" y2="5" stroke="#44454d" stroke-width="1.2"/><line x1="18.5" y1="2.5" x2="18.5" y2="7.5" stroke="#44454d" stroke-width="1.2"/></svg>
<div class="a" style="left:366px;top:752px;width:200px;height:78px;background:#c0c0c0"></div>
<div class="a" id="thumb" style="left:420px;top:755px;width:90px;height:70px;background:#fff;border:1px solid #e86a50;overflow:hidden"></div>
<div class="a" style="left:361px;top:886px;width:11px;height:11px;background:#dfe3ee"></div>
<svg class="a" style="left:361px;top:886px" width="11" height="11"><path d="M2 5.5 H9 M6.5 3 L9 5.5 L6.5 8" fill="none" stroke="#222" stroke-width="1.1"/></svg>
<div class="a" style="left:375px;top:882px;width:59px;height:19px;border:1px solid #8d8e95"></div>
<div class="t" style="left:377px;top:885px;width:51px;text-align:right;letter-spacing:.2px">1,709.1</div>
<div class="t" style="left:438px;top:885px;letter-spacing:.4px">mm</div>
<div class="a" style="left:471px;top:886px;width:11px;height:11px;background:#dfe3ee"></div>
<svg class="a" style="left:471px;top:886px" width="11" height="11"><path d="M5.5 9 V2 M3 4.5 L5.5 2 L8 4.5" fill="none" stroke="#222" stroke-width="1.1"/></svg>
<div class="a" style="left:485px;top:882px;width:59px;height:19px;border:1px solid #8d8e95"></div>
<div class="t" style="left:487px;top:885px;width:51px;text-align:right;letter-spacing:.2px">448.2</div>
<div class="t" style="left:548px;top:885px;letter-spacing:.4px">mm</div>
<div class="hl" style="left:354px;top:912px;width:1455px"></div>
<div class="hl" style="left:354px;top:948px;width:1455px"></div>
<div class="a" style="left:361px;top:920px;width:29px;height:19px;background:#97979d"></div>
<svg class="a" style="left:361px;top:920px" width="29" height="19"><rect x="13" y="5" width="10" height="7" fill="#c8d0e0" stroke="#a9aab0" stroke-width=".6"/><rect x="7" y="8" width="12" height="8" fill="#e8e8ea"/></svg>
<div class="btn" style="left:1649px;top:920px;width:69px;height:19px;line-height:21px;letter-spacing:.2px">Close</div>
<div class="a" style="left:1732px;top:920px;width:69px;height:19px;line-height:19px;border:1px solid #85868d;color:#96979d;text-align:center;letter-spacing:.2px">Save</div>
<div class="hl" style="left:56px;top:954px;width:1752px"></div>
<div class="hl" style="left:56px;top:990px;width:1752px;background:#a9aab0"></div>
<div class="btn" style="left:1216px;top:962px;width:149px;height:19px;line-height:21px;letter-spacing:.2px">Job Memory Card...</div>
<div class="btn" style="left:1380px;top:962px;width:89px;height:19px;line-height:21px;letter-spacing:.2px">Submit...</div>
<div class="btn" style="left:1484px;top:962px;width:89px;height:19px;line-height:21px;letter-spacing:.2px">Planning...</div>
<div class="btn" style="left:1586px;top:962px;width:113px;height:19px;line-height:21px;letter-spacing:.2px">Properties...</div>
<div class="btn" style="left:1712px;top:962px;width:89px;height:19px;line-height:21px;letter-spacing:.2px">Close Job</div>
<div class="a" style="left:1588px;top:963px;width:109px;height:17px;border:1px dotted #fff"></div>
<div class="a" style="left:63px;top:962px;width:19px;height:19px;background:#c8c9ce;border:1px solid #e0e0e4"></div>
<svg class="a" style="left:63px;top:962px" width="19" height="19"><rect x="3.5" y="3.5" width="12" height="12" fill="#fff" stroke="#222" stroke-width="1"/><rect x="4" y="4" width="11" height="2.4" fill="#9ddcf5"/><line x1="5" y1="8.5" x2="14" y2="8.5" stroke="#222"/><line x1="5" y1="11" x2="14" y2="11" stroke="#222"/><line x1="5" y1="13.5" x2="14" y2="13.5" stroke="#222"/></svg>
<div class="a" style="left:89px;top:962px;width:19px;height:19px;background:#97979d"></div>
<svg class="a" style="left:89px;top:962px" width="19" height="19"><rect x="3.5" y="3.5" width="12" height="12" fill="#e8eef2" stroke="#222" stroke-width="1"/><rect x="4" y="4" width="11" height="2.4" fill="#9ddcf5"/><rect x="5" y="8" width="4" height="2.6" fill="#9ddcf5" stroke="#222" stroke-width=".7"/><rect x="10" y="8" width="4" height="2.6" fill="#9ddcf5" stroke="#222" stroke-width=".7"/><rect x="5" y="11.8" width="4" height="2.6" fill="#9ddcf5" stroke="#222" stroke-width=".7"/><rect x="10" y="11.8" width="4" height="2.6" fill="#9ddcf5" stroke="#222" stroke-width=".7"/></svg>
<div class="a" style="left:573px;top:173px;width:1px;height:503px;background:#8d8e95"></div>
<div class="a" style="left:593px;top:197px;width:1213px;height:478px;background:#c0c0c0"></div>
<div class="a" style="left:1806px;top:173px;width:1px;height:503px;background:#2e2e34"></div>
<div class="a" style="left:575px;top:179px;width:17px;height:17px;background:#c6c6c8;border-left:1px solid #fff;border-top:1px solid #fff"></div>
<div class="a" style="left:583px;top:181px;width:1.3px;height:14px;background:#000"></div><div class="a" style="left:576px;top:187.4px;width:15px;height:1.3px;background:#000"></div>
<svg class="a" style="left:574px;top:173px" width="1232" height="503" viewBox="574 173 1232 503" font-family="Liberation Sans, sans-serif" font-size="10"><defs><clipPath id="hr"><rect x="593" y="173" width="1213" height="24"/></clipPath><clipPath id="vr"><rect x="574" y="197" width="19" height="479"/></clipPath><clipPath id="cv"><rect x="593" y="197" width="1213" height="478"/></clipPath></defs><g clip-path="url(#hr)"><path d="M598.0 194.4 V197 M603.0 194.4 V197 M608.0 194.4 V197 M613.5 194.4 V197 M618.5 194 V197 M623.5 194.4 V197 M629.0 194.4 V197 M634.0 194.4 V197 M639.0 194.4 V197 M644.0 191.5 V197 M649.5 194.4 V197 M654.5 194.4 V197 M659.5 194.4 V197 M665.0 194.4 V197 M670.0 194 V197 M675.0 194.4 V197 M680.5 194.4 V197 M685.5 194.4 V197 M690.5 194.4 V197 M696.0 191.5 V197 M701.0 194.4 V197 M706.0 194.4 V197 M711.0 194.4 V197 M716.5 194.4 V197 M721.5 194 V197 M726.5 194.4 V197 M732.0 194.4 V197 M737.0 194.4 V197 M742.0 194.4 V197 M747.0 191.5 V197 M752.5 194.4 V197 M757.5 194.4 V197 M762.5 194.4 V197 M768.0 194.4 V197 M773.0 194 V197 M778.0 194.4 V197 M783.5 194.4 V197 M788.5 194.4 V197 M793.5 194.4 V197 M799.0 191.5 V197 M804.0 194.4 V197 M809.0 194.4 V197 M814.0 194.4 V197 M819.5 194.4 V197 M824.5 194 V197 M829.5 194.4 V197 M835.0 194.4 V197 M840.0 194.4 V197 M845.0 194.4 V197 M850.0 191.5 V197 M855.5 194.4 V197 M860.5 194.4 V197 M865.5 194.4 V197 M871.0 194.4 V197 M876.0 194 V197 M881.0 194.4 V197 M886.5 194.4 V197 M891.5 194.4 V197 M896.5 194.4 V197 M902.0 191.5 V197 M907.0 194.4 V197 M912.0 194.4 V197 M917.0 194.4 V197 M922.5 194.4 V197 M927.5 194 V197 M932.5 194.4 V197 M938.0 194.4 V197 M943.0 194.4 V197 M948.0 194.4 V197 M953.0 191.5 V197 M958.5 194.4 V197 M963.5 194.4 V197 M968.5 194.4 V197 M974.0 194.4 V197 M979.0 194 V197 M984.0 194.4 V197 M989.5 194.4 V197 M994.5 194.4 V197 M999.5 194.4 V197 M1005.0 191.5 V197 M1010.0 194.4 V197 M1015.0 194.4 V197 M1020.0 194.4 V197 M1025.5 194.4 V197 M1030.5 194 V197 M1035.5 194.4 V197 M1041.0 194.4 V197 M1046.0 194.4 V197 M1051.0 194.4 V197 M1056.0 191.5 V197 M1061.5 194.4 V197 M1066.5 194.4 V197 M1071.5 194.4 V197 M1077.0 194.4 V197 M1082.0 194 V197 M1087.0 194.4 V197 M1092.5 194.4 V197 M1097.5 194.4 V197 M1102.5 194.4 V197 M1108.0 191.5 V197 M1113.0 194.4 V197 M1118.0 194.4 V197 M1123.0 194.4 V197 M1128.5 194.4 V197 M1133.5 194 V197 M1138.5 194.4 V197 M1144.0 194.4 V197 M1149.0 194.4 V197 M1154.0 194.4 V197 M1159.0 191.5 V197 M1164.5 194.4 V197 M1169.5 194.4 V197 M1174.5 194.4 V197 M1180.0 194.4 V197 M1185.0 194 V197 M1190.0 194.4 V197 M1195.5 194.4 V197 M1200.5 194.4 V197 M1205.5 194.4 V197 M1211.0 191.5 V197 M1216.0 194.4 V197 M1221.0 194.4 V197 M1226.0 194.4 V197 M1231.5 194.4 V197 M1236.5 194 V197 M1241.5 194.4 V197 M1247.0 194.4 V197 M1252.0 194.4 V197 M1257.0 194.4 V197 M1262.0 191.5 V197 M1267.5 194.4 V197 M1272.5 194.4 V197 M1277.5 194.4 V197 M1283.0 194.4 V197 M1288.0 194 V197 M1293.0 194.4 V197 M1298.5 194.4 V197 M1303.5 194.4 V197 M1308.5 194.4 V197 M1314.0 191.5 V197 M1319.0 194.4 V197 M1324.0 194.4 V197 M1329.0 194.4 V197 M1334.5 194.4 V197 M1339.5 194 V197 M1344.5 194.4 V197 M1350.0 194.4 V197 M1355.0 194.4 V197 M1360.0 194.4 V197 M1365.0 191.5 V197 M1370.5 194.4 V197 M1375.5 194.4 V197 M1380.5 194.4 V197 M1386.0 194.4 V197 M1391.0 194 V197 M1396.0 194.4 V197 M1401.5 194.4 V197 M1406.5 194.4 V197 M1411.5 194.4 V197 M1417.0 191.5 V197 M1422.0 194.4 V197 M1427.0 194.4 V197 M1432.0 194.4 V197 M1437.5 194.4 V197 M1442.5 194 V197 M1447.5 194.4 V197 M1453.0 194.4 V197 M1458.0 194.4 V197 M1463.0 194.4 V197 M1468.0 191.5 V197 M1473.5 194.4 V197 M1478.5 194.4 V197 M1483.5 194.4 V197 M1489.0 194.4 V197 M1494.0 194 V197 M1499.0 194.4 V197 M1504.5 194.4 V197 M1509.5 194.4 V197 M1514.5 194.4 V197 M1520.0 191.5 V197 M1525.0 194.4 V197 M1530.0 194.4 V197 M1535.0 194.4 V197 M1540.5 194.4 V197 M1545.5 194 V197 M1550.5 194.4 V197 M1556.0 194.4 V197 M1561.0 194.4 V197 M1566.0 194.4 V197 M1571.0 191.5 V197 M1576.5 194.4 V197 M1581.5 194.4 V197 M1586.5 194.4 V197 M1592.0 194.4 V197 M1597.0 194 V197 M1602.0 194.4 V197 M1607.5 194.4 V197 M1612.5 194.4 V197 M1617.5 194.4 V197 M1623.0 191.5 V197 M1628.0 194.4 V197 M1633.0 194.4 V197 M1638.0 194.4 V197 M1643.5 194.4 V197 M1648.5 194 V197 M1653.5 194.4 V197 M1659.0 194.4 V197 M1664.0 194.4 V197 M1669.0 194.4 V197 M1674.0 191.5 V197 M1679.5 194.4 V197 M1684.5 194.4 V197 M1689.5 194.4 V197 M1695.0 194.4 V197 M1700.0 194 V197 M1705.0 194.4 V197 M1710.5 194.4 V197 M1715.5 194.4 V197 M1720.5 194.4 V197 M1726.0 191.5 V197 M1731.0 194.4 V197 M1736.0 194.4 V197 M1741.0 194.4 V197 M1746.5 194.4 V197 M1751.5 194 V197 M1756.5 194.4 V197 M1762.0 194.4 V197 M1767.0 194.4 V197 M1772.0 194.4 V197 M1777.0 191.5 V197 M1782.5 194.4 V197 M1787.5 194.4 V197 M1792.5 194.4 V197 M1798.0 194.4 V197 M1803.0 194 V197 " stroke="#000" stroke-width="1" fill="none" shape-rendering="crispEdges"/><text x="618.5" y="191.3" text-anchor="middle" fill="#000" letter-spacing=".2">-600</text><text x="670.0" y="191.3" text-anchor="middle" fill="#000" letter-spacing=".2">-500</text><text x="721.5" y="191.3" text-anchor="middle" fill="#000" letter-spacing=".2">-400</text><text x="773.0" y="191.3" text-anchor="middle" fill="#000" letter-spacing=".2">-300</text><text x="824.5" y="191.3" text-anchor="middle" fill="#000" letter-spacing=".2">-200</text><text x="876.0" y="191.3" text-anchor="middle" fill="#000" letter-spacing=".2">-100</text><text x="927.5" y="191.3" text-anchor="middle" fill="#000" letter-spacing=".2">0</text><text x="979.0" y="191.3" text-anchor="middle" fill="#000" letter-spacing=".2">100</text><text x="1030.5" y="191.3" text-anchor="middle" fill="#000" letter-spacing=".2">200</text><text x="1082.0" y="191.3" text-anchor="middle" fill="#000" letter-spacing=".2">300</text><text x="1133.5" y="191.3" text-anchor="middle" fill="#000" letter-spacing=".2">400</text><text x="1185.0" y="191.3" text-anchor="middle" fill="#000" letter-spacing=".2">500</text><text x="1236.5" y="191.3" text-anchor="middle" fill="#000" letter-spacing=".2">600</text><text x="1288.0" y="191.3" text-anchor="middle" fill="#000" letter-spacing=".2">700</text><text x="1339.5" y="191.3" text-anchor="middle" fill="#000" letter-spacing=".2">800</text><text x="1391.0" y="191.3" text-anchor="middle" fill="#000" letter-spacing=".2">900</text><text x="1442.5" y="191.3" text-anchor="middle" fill="#000" letter-spacing=".2">1000</text><text x="1494.0" y="191.3" text-anchor="middle" fill="#000" letter-spacing=".2">1100</text><text x="1545.5" y="191.3" text-anchor="middle" fill="#000" letter-spacing=".2">1200</text><text x="1597.0" y="191.3" text-anchor="middle" fill="#000" letter-spacing=".2">1300</text><text x="1648.5" y="191.3" text-anchor="middle" fill="#000" letter-spacing=".2">1400</text><text x="1700.0" y="191.3" text-anchor="middle" fill="#000" letter-spacing=".2">1500</text><text x="1751.5" y="191.3" text-anchor="middle" fill="#000" letter-spacing=".2">1600</text><text x="1803.0" y="191.3" text-anchor="middle" fill="#000" letter-spacing=".2">1700</text></g><g clip-path="url(#vr)"><path d="M587.5 671.0 H593 M590.4 666.0 H593 M590.4 661.0 H593 M590.4 656.0 H593 M590.4 650.5 H593 M590 645.5 H593 M590.4 640.5 H593 M590.4 635.0 H593 M590.4 630.0 H593 M590.4 625.0 H593 M587.5 620.0 H593 M590.4 614.5 H593 M590.4 609.5 H593 M590.4 604.5 H593 M590.4 599.0 H593 M590 594.0 H593 M590.4 589.0 H593 M590.4 583.5 H593 M590.4 578.5 H593 M590.4 573.5 H593 M587.5 568.0 H593 M590.4 563.0 H593 M590.4 558.0 H593 M590.4 553.0 H593 M590.4 547.5 H593 M590 542.5 H593 M590.4 537.5 H593 M590.4 532.0 H593 M590.4 527.0 H593 M590.4 522.0 H593 M587.5 517.0 H593 M590.4 511.5 H593 M590.4 506.5 H593 M590.4 501.5 H593 M590.4 496.0 H593 M590 491.0 H593 M590.4 486.0 H593 M590.4 480.5 H593 M590.4 475.5 H593 M590.4 470.5 H593 M587.5 465.0 H593 M590.4 460.0 H593 M590.4 455.0 H593 M590.4 450.0 H593 M590.4 444.5 H593 M590 439.5 H593 M590.4 434.5 H593 M590.4 429.0 H593 M590.4 424.0 H593 M590.4 419.0 H593 M587.5 414.0 H593 M590.4 408.5 H593 M590.4 403.5 H593 M590.4 398.5 H593 M590.4 393.0 H593 M590 388.0 H593 M590.4 383.0 H593 M590.4 377.5 H593 M590.4 372.5 H593 M590.4 367.5 H593 M587.5 362.0 H593 M590.4 357.0 H593 M590.4 352.0 H593 M590.4 347.0 H593 M590.4 341.5 H593 M590 336.5 H593 M590.4 331.5 H593 M590.4 326.0 H593 M590.4 321.0 H593 M590.4 316.0 H593 M587.5 311.0 H593 M590.4 305.5 H593 M590.4 300.5 H593 M590.4 295.5 H593 M590.4 290.0 H593 M590 285.0 H593 M590.4 280.0 H593 M590.4 274.5 H593 M590.4 269.5 H593 M590.4 264.5 H593 M587.5 259.0 H593 M590.4 254.0 H593 M590.4 249.0 H593 M590.4 244.0 H593 M590.4 238.5 H593 M590 233.5 H593 M590.4 228.5 H593 M590.4 223.0 H593 M590.4 218.0 H593 M590.4 213.0 H593 M587.5 208.0 H593 M590.4 202.5 H593 " stroke="#000" stroke-width="1" fill="none" shape-rendering="crispEdges"/><text transform="translate(586.5 645.5) rotate(-90)" text-anchor="middle" fill="#000">0</text><text transform="translate(586.5 594.0) rotate(-90)" text-anchor="middle" fill="#000">100</text><text transform="translate(586.5 542.5) rotate(-90)" text-anchor="middle" fill="#000">200</text><text transform="translate(586.5 491.0) rotate(-90)" text-anchor="middle" fill="#000">300</text><text transform="translate(586.5 439.5) rotate(-90)" text-anchor="middle" fill="#000">400</text><text transform="translate(586.5 388.0) rotate(-90)" text-anchor="middle" fill="#000">500</text><text transform="translate(586.5 336.5) rotate(-90)" text-anchor="middle" fill="#000">600</text><text transform="translate(586.5 285.0) rotate(-90)" text-anchor="middle" fill="#000">700</text><text transform="translate(586.5 233.5) rotate(-90)" text-anchor="middle" fill="#000">800</text></g><g clip-path="url(#cv)"><filter id="bl" x="-5%" y="-5%" width="110%" height="110%"><feGaussianBlur stdDeviation="0.9"/></filter><filter id="bl2" x="-5%" y="-5%" width="110%" height="110%"><feGaussianBlur stdDeviation="0.5"/></filter><rect x="927.5" y="226.5" width="544" height="419" fill="#fff" stroke="#f01818" stroke-width="1.2"/><rect x="929.5" y="236" width="540" height="386.5" fill="none" stroke="#f4ec10" stroke-width="1.2"/><rect x="976" y="285" width="2.6" height="3" fill="#ffe800" /><rect x="978.6" y="285" width="2.6" height="3" fill="#222" /><rect x="981.2" y="285" width="2.6" height="3" fill="#10a8e8" /><rect x="983.8" y="285" width="2.6" height="3" fill="#e0108c" /><rect x="986.4" y="285" width="2.6" height="3" fill="#888" /><rect x="989" y="285" width="2.6" height="3" fill="#10a8e8" /><rect x="991.6" y="285" width="2.6" height="3" fill="#333" /><rect x="994.2" y="285" width="2.6" height="3" fill="#e0108c" /><rect x="996.8" y="285" width="2.6" height="3" fill="#ffe800" /><rect x="999.4" y="285" width="2.6" height="3" fill="#555" /><rect x="1002" y="285" width="2.6" height="3" fill="#ffe800" /><rect x="1004.6" y="285" width="2.6" height="3" fill="#222" /><rect x="1007.2" y="285" width="2.6" height="3" fill="#10a8e8" /><rect x="1009.8" y="285" width="2.6" height="3" fill="#e0108c" /><rect x="1012.4" y="285" width="2.6" height="3" fill="#888" /><rect x="1015" y="285" width="2.6" height="3" fill="#10a8e8" /><rect x="1017.6" y="285" width="2.6" height="3" fill="#333" /><rect x="1020.2" y="285" width="2.6" height="3" fill="#e0108c" /><rect x="1022.8" y="285" width="2.6" height="3" fill="#ffe800" /><rect x="1025.4" y="285" width="2.6" height="3" fill="#555" /><rect x="1028" y="285" width="2.6" height="3" fill="#ffe800" /><rect x="1030.6" y="285" width="2.6" height="3" fill="#222" /><rect x="1033.2" y="285" width="2.6" height="3" fill="#10a8e8" /><rect x="1035.8" y="285" width="2.6" height="3" fill="#e0108c" /><rect x="1038.4" y="285" width="2.6" height="3" fill="#888" /><rect x="1041" y="285" width="2.6" height="3" fill="#10a8e8" /><rect x="1043.6" y="285" width="2.6" height="3" fill="#333" /><rect x="1046.2" y="285" width="2.6" height="3" fill="#e0108c" /><rect x="1048.8" y="285" width="2.6" height="3" fill="#ffe800" /><rect x="1051.4" y="285" width="2.6" height="3" fill="#555" /><rect x="1054" y="285" width="2.6" height="3" fill="#ffe800" /><rect x="1056.6" y="285" width="2.6" height="3" fill="#222" /><rect x="1059.2" y="285" width="2.6" height="3" fill="#10a8e8" /><rect x="1061.8" y="285" width="2.6" height="3" fill="#e0108c" /><rect x="1064.4" y="285" width="2.6" height="3" fill="#888" /><rect x="1067" y="285" width="2.6" height="3" fill="#10a8e8" /><rect x="1069.6" y="285" width="2.6" height="3" fill="#333" /><rect x="1072.2" y="285" width="2.6" height="3" fill="#e0108c" /><rect x="1074.8" y="285" width="2.6" height="3" fill="#ffe800" /><rect x="1077.4" y="285" width="2.6" height="3" fill="#555" /><rect x="1080" y="285" width="2.6" height="3" fill="#ffe800" /><rect x="1082.6" y="285" width="2.6" height="3" fill="#222" /><rect x="1085.2" y="285" width="2.6" height="3" fill="#10a8e8" /><rect x="1087.8" y="285" width="2.6" height="3" fill="#e0108c" /><rect x="1090.4" y="285" width="2.6" height="3" fill="#888" /><rect x="1093" y="285" width="2.6" height="3" fill="#10a8e8" /><rect x="1095.6" y="285" width="2.6" height="3" fill="#333" /><rect x="1098.2" y="285" width="2.6" height="3" fill="#e0108c" /><rect x="1100.8" y="285" width="2.6" height="3" fill="#ffe800" /><rect x="1103.4" y="285" width="2.6" height="3" fill="#555" /><rect x="1106" y="285" width="2.6" height="3" fill="#ffe800" /><rect x="1108.6" y="285" width="2.6" height="3" fill="#222" /><rect x="1111.2" y="285" width="2.6" height="3" fill="#10a8e8" /><rect x="1113.8" y="285" width="2.6" height="3" fill="#e0108c" /><rect x="1116.4" y="285" width="2.6" height="3" fill="#888" /><rect x="1119" y="285" width="2.6" height="3" fill="#10a8e8" /><rect x="1121.6" y="285" width="2.6" height="3" fill="#333" /><rect x="1124.2" y="285" width="2.6" height="3" fill="#e0108c" /><rect x="1126.8" y="285" width="2.6" height="3" fill="#ffe800" /><rect x="1129.4" y="285" width="2.6" height="3" fill="#555" /><rect x="1132" y="285" width="2.6" height="3" fill="#ffe800" /><rect x="1134.6" y="285" width="2.6" height="3" fill="#222" /><rect x="1137.2" y="285" width="2.6" height="3" fill="#10a8e8" /><rect x="1139.8" y="285" width="2.6" height="3" fill="#e0108c" /><rect x="1142.4" y="285" width="2.6" height="3" fill="#888" /><rect x="1145" y="285" width="2.6" height="3" fill="#10a8e8" /><rect x="1147.6" y="285" width="2.6" height="3" fill="#333" /><rect x="1150.2" y="285" width="2.6" height="3" fill="#e0108c" /><rect x="1152.8" y="285" width="2.6" height="3" fill="#ffe800" /><rect x="1155.4" y="285" width="2.6" height="3" fill="#555" /><rect x="1158" y="285" width="2.6" height="3" fill="#ffe800" /><rect x="1160.6" y="285" width="2.6" height="3" fill="#222" /><rect x="1163.2" y="285" width="2.6" height="3" fill="#10a8e8" /><rect x="1165.8" y="285" width="2.6" height="3" fill="#e0108c" /><rect x="1168.4" y="285" width="2.6" height="3" fill="#888" /><rect x="1171" y="285" width="2.6" height="3" fill="#10a8e8" /><rect x="1173.6" y="285" width="2.6" height="3" fill="#333" /><rect x="1176.2" y="285" width="2.6" height="3" fill="#e0108c" /><rect x="1178.8" y="285" width="2.6" height="3" fill="#ffe800" /><rect x="1181.4" y="285" width="2.6" height="3" fill="#555" /><rect x="1184" y="285" width="2.6" height="3" fill="#ffe800" /><rect x="1186.6" y="285" width="2.6" height="3" fill="#222" /><rect x="1189.2" y="285" width="2.6" height="3" fill="#10a8e8" /><rect x="1191.8" y="285" width="2.6" height="3" fill="#e0108c" /><rect x="1194.4" y="285" width="2.6" height="3" fill="#888" /><rect x="1197" y="285" width="2.6" height="3" fill="#10a8e8" /><rect x="1199.6" y="285" width="2.6" height="3" fill="#333" /><rect x="1202.2" y="285" width="2.6" height="3" fill="#e0108c" /><rect x="1204.8" y="285" width="2.6" height="3" fill="#ffe800" /><rect x="1207.4" y="285" width="2.6" height="3" fill="#555" /><rect x="1210" y="285" width="2.6" height="3" fill="#ffe800" /><rect x="1212.6" y="285" width="2.6" height="3" fill="#222" /><rect x="1215.2" y="285" width="2.6" height="3" fill="#10a8e8" /><rect x="1217.8" y="285" width="2.6" height="3" fill="#e0108c" /><rect x="1220.4" y="285" width="2.6" height="3" fill="#888" /><rect x="1223" y="285" width="2.6" height="3" fill="#10a8e8" /><rect x="1225.6" y="285" width="2.6" height="3" fill="#333" /><rect x="1228.2" y="285" width="2.6" height="3" fill="#e0108c" /><rect x="1230.8" y="285" width="2.6" height="3" fill="#ffe800" /><rect x="1233.4" y="285" width="2.6" height="3" fill="#555" /><rect x="1236" y="285" width="2.6" height="3" fill="#ffe800" /><rect x="1238.6" y="285" width="2.6" height="3" fill="#222" /><rect x="1241.2" y="285" width="2.6" height="3" fill="#10a8e8" /><rect x="1243.8" y="285" width="2.6" height="3" fill="#e0108c" /><rect x="1246.4" y="285" width="2.6" height="3" fill="#888" /><rect x="1249" y="285" width="2.6" height="3" fill="#10a8e8" /><rect x="1251.6" y="285" width="2.6" height="3" fill="#333" /><rect x="1254.2" y="285" width="2.6" height="3" fill="#e0108c" /><rect x="1256.8" y="285" width="2.6" height="3" fill="#ffe800" /><rect x="1259.4" y="285" width="2.6" height="3" fill="#555" /><rect x="1262" y="285" width="2.6" height="3" fill="#ffe800" /><rect x="1264.6" y="285" width="2.6" height="3" fill="#222" /><rect x="1267.2" y="285" width="2.6" height="3" fill="#10a8e8" /><rect x="1269.8" y="285" width="2.6" height="3" fill="#e0108c" /><rect x="1272.4" y="285" width="2.6" height="3" fill="#888" /><rect x="1275" y="285" width="2.6" height="3" fill="#10a8e8" /><rect x="1277.6" y="285" width="2.6" height="3" fill="#333" /><rect x="1280.2" y="285" width="2.6" height="3" fill="#e0108c" /><rect x="1282.8" y="285" width="2.6" height="3" fill="#ffe800" /><rect x="1285.4" y="285" width="2.6" height="3" fill="#555" /><rect x="1288" y="285" width="2.6" height="3" fill="#ffe800" /><rect x="1290.6" y="285" width="2.6" height="3" fill="#222" /><rect x="1293.2" y="285" width="2.6" height="3" fill="#10a8e8" /><rect x="1295.8" y="285" width="2.6" height="3" fill="#e0108c" /><rect x="1298.4" y="285" width="2.6" height="3" fill="#888" /><rect x="1301" y="285" width="2.6" height="3" fill="#10a8e8" /><rect x="1303.6" y="285" width="2.6" height="3" fill="#333" /><rect x="1306.2" y="285" width="2.6" height="3" fill="#e0108c" /><rect x="1308.8" y="285" width="2.6" height="3" fill="#ffe800" /><rect x="1311.4" y="285" width="2.6" height="3" fill="#555" /><rect x="1314" y="285" width="2.6" height="3" fill="#ffe800" /><rect x="1316.6" y="285" width="2.6" height="3" fill="#222" /><rect x="1319.2" y="285" width="2.6" height="3" fill="#10a8e8" /><rect x="1321.8" y="285" width="2.6" height="3" fill="#e0108c" /><rect x="1324.4" y="285" width="2.6" height="3" fill="#888" /><rect x="1327" y="285" width="2.6" height="3" fill="#10a8e8" /><rect x="1329.6" y="285" width="2.6" height="3" fill="#333" /><rect x="1332.2" y="285" width="2.6" height="3" fill="#e0108c" /><rect x="1334.8" y="285" width="2.6" height="3" fill="#ffe800" /><rect x="1337.4" y="285" width="2.6" height="3" fill="#555" /><rect x="1340" y="285" width="2.6" height="3" fill="#ffe800" /><rect x="1342.6" y="285" width="2.6" height="3" fill="#222" /><rect x="1345.2" y="285" width="2.6" height="3" fill="#10a8e8" /><rect x="1347.8" y="285" width="2.6" height="3" fill="#e0108c" /><rect x="1350.4" y="285" width="2.6" height="3" fill="#888" /><rect x="1353" y="285" width="2.6" height="3" fill="#10a8e8" /><rect x="1355.6" y="285" width="2.6" height="3" fill="#333" /><rect x="1358.2" y="285" width="2.6" height="3" fill="#e0108c" /><rect x="1360.8" y="285" width="2.6" height="3" fill="#ffe800" /><rect x="1363.4" y="285" width="2.6" height="3" fill="#555" /><rect x="1366" y="285" width="2.6" height="3" fill="#ffe800" /><rect x="1368.6" y="285" width="2.6" height="3" fill="#222" /><rect x="1371.2" y="285" width="2.6" height="3" fill="#10a8e8" /><rect x="1373.8" y="285" width="2.6" height="3" fill="#e0108c" /><rect x="1376.4" y="285" width="2.6" height="3" fill="#888" /><rect x="1379" y="285" width="2.6" height="3" fill="#10a8e8" /><rect x="1381.6" y="285" width="2.6" height="3" fill="#333" /><rect x="1384.2" y="285" width="2.6" height="3" fill="#e0108c" /><rect x="1386.8" y="285" width="2.6" height="3" fill="#ffe800" /><rect x="1389.4" y="285" width="2.6" height="3" fill="#555" /><rect x="1392" y="285" width="2.6" height="3" fill="#ffe800" /><rect x="1394.6" y="285" width="2.6" height="3" fill="#222" /><rect x="1397.2" y="285" width="2.6" height="3" fill="#10a8e8" /><rect x="1399.8" y="285" width="2.6" height="3" fill="#e0108c" /><rect x="1402.4" y="285" width="2.6" height="3" fill="#888" /><rect x="1405" y="285" width="2.6" height="3" fill="#10a8e8" /><rect x="1407.6" y="285" width="2.6" height="3" fill="#333" /><rect x="1410.2" y="285" width="2.6" height="3" fill="#e0108c" /><rect x="1412.8" y="285" width="2.6" height="3" fill="#ffe800" /><rect x="1415.4" y="285" width="2.6" height="3" fill="#555" /><rect x="1418" y="285" width="2.6" height="3" fill="#ffe800" /><rect x="1420.6" y="285" width="2.6" height="3" fill="#222" /><rect x="997" y="297" width="5" height="18" fill="#dededf" /><rect x="1003" y="297" width="20" height="30" fill="#dededf" /><rect x="1011" y="332" width="12" height="26" fill="#dededf" /><rect x="1027" y="297" width="8" height="28" fill="#dededf" /><rect x="1035" y="297" width="10" height="30" fill="#dededf" /><rect x="1029" y="330" width="16" height="28" fill="#dededf" /><rect x="1048" y="297" width="6" height="32" fill="#dededf" /><rect x="1064.2" y="297.5" width="3.6" height="52" fill="#4a58a8" opacity=".75"/><rect x="1058" y="297" width="3.4" height="80" fill="#e04038" opacity=".75"/><clipPath id="pc1"><rect x="1088" y="290" width="111" height="107"/></clipPath><g clip-path="url(#pc1)"><g filter="url(#bl)"><rect x="1084" y="286" width="119" height="115" fill="#fcfbfe"/><g transform="translate(1085 285) scale(0.126646)"><rect x="25" y="40" width="875" height="852" fill="#fcfbfe"/><rect x="25" y="40" width="90" height="852" fill="#eeeef6"/><rect x="110" y="45" width="790" height="40" fill="#4d4ca2"/><rect x="380" y="60" width="340" height="18" fill="#6a69b4"/><rect x="90" y="318" width="810" height="42" fill="#5d5cae"/><rect x="400" y="325" width="340" height="22" fill="#8886c6"/><rect x="90" y="632" width="810" height="40" fill="#5554a8"/><rect x="390" y="672" width="420" height="28" fill="#4a4aa0"/><rect x="85" y="40" width="40" height="852" fill="#4a4aa0"/><rect x="362" y="85" width="22" height="240" fill="#6665b2"/><rect x="385" y="650" width="36" height="242" fill="#4646a0"/><polygon points="715,40 748,40 840,892 805,892" fill="#5352a8"/><rect x="340" y="360" width="14" height="530" fill="#d8b898" opacity="0.8"/><polygon points="30,205 120,195 300,205 440,240 300,265 120,235 30,232" fill="#f4e2da"/><ellipse cx="340" cy="240" rx="55" ry="38" fill="#fbf4f2"/><polygon points="320,260 400,250 420,290 350,330" fill="#f2ddd4"/><polygon points="30,560 300,555 480,590 300,615 30,600" fill="#f6e8e2"/><polygon points="60,790 280,770 520,815 300,860 70,835" fill="#f1dcd0"/><ellipse cx="360" cy="815" rx="70" ry="40" fill="#fbf6f4"/><ellipse cx="500" cy="815" rx="26" ry="28" fill="#5a3c34"/><polygon points="448,125 482,125 500,480 430,480" fill="#f3ddd4"/><polygon points="430,480 470,560 215,750 175,745" fill="#f2dacf"/><polygon points="420,480 510,490 590,530 570,585 470,580 425,530" fill="#2a2228"/><polygon points="555,505 650,325 672,335 590,530" fill="#efd4c8"/><polygon points="575,560 610,560 705,715 690,735" fill="#efd4c8"/><ellipse cx="650" cy="525" rx="38" ry="34" fill="#e8c4b4"/><ellipse cx="675" cy="505" rx="30" ry="30" fill="#4a3430"/></g></g></g><clipPath id="pc2"><rect x="1199" y="290" width="111" height="107"/></clipPath><g clip-path="url(#pc2)"><g filter="url(#bl)"><rect x="1195" y="286" width="119" height="115" fill="#fbfbfb"/><g transform="translate(1085 285) scale(0.126646)"><rect x="900" y="40" width="880" height="852" fill="#fbfbfb"/><rect x="900" y="40" width="140" height="852" fill="#f1f1f2"/><rect x="1075" y="40" width="10" height="550" fill="#ececee"/><rect x="1125" y="40" width="10" height="550" fill="#ececee"/><rect x="1175" y="40" width="10" height="550" fill="#ececee"/><rect x="1225" y="40" width="10" height="550" fill="#ececee"/><rect x="1275" y="40" width="10" height="550" fill="#ececee"/><rect x="1325" y="40" width="10" height="550" fill="#ececee"/><rect x="1375" y="40" width="10" height="550" fill="#ececee"/><rect x="1425" y="40" width="10" height="550" fill="#ececee"/><rect x="1475" y="40" width="10" height="550" fill="#ececee"/><rect x="1525" y="40" width="10" height="550" fill="#ececee"/><rect x="1575" y="40" width="10" height="550" fill="#ececee"/><rect x="1625" y="40" width="10" height="550" fill="#ececee"/><rect x="1675" y="40" width="10" height="550" fill="#ececee"/><rect x="1725" y="40" width="10" height="550" fill="#ececee"/><rect x="1060" y="590" width="720" height="302" fill="#f7e9dd"/><rect x="1060" y="625" width="720" height="10" fill="#e6ccb6" opacity="0.7"/><rect x="1060" y="665" width="720" height="10" fill="#e6ccb6" opacity="0.7"/><rect x="1060" y="705" width="720" height="10" fill="#e6ccb6" opacity="0.7"/><rect x="1060" y="745" width="720" height="10" fill="#e6ccb6" opacity="0.7"/><rect x="1060" y="785" width="720" height="10" fill="#e6ccb6" opacity="0.7"/><rect x="1060" y="825" width="720" height="10" fill="#e6ccb6" opacity="0.7"/><rect x="1060" y="865" width="720" height="10" fill="#e6ccb6" opacity="0.7"/><rect x="1060" y="590" width="720" height="40" fill="#fbf4ee"/><rect x="1030" y="40" width="30" height="852" fill="#4e4a4c"/><rect x="1660" y="40" width="30" height="520" fill="#5e5a5c"/><rect x="1340" y="40" width="24" height="590" fill="#dcbc94"/><rect x="1050" y="262" width="730" height="18" fill="#6e6a6c"/><rect x="1050" y="540" width="730" height="40" fill="#aaa6a6"/><rect x="1060" y="60" width="120" height="95" fill="#e4e4e4"/><polygon points="950,335 1060,365 1070,395 985,385" fill="#e8cdbc"/><polygon points="960,600 1075,590 1085,620 985,640" fill="#e8cdbc"/><polygon points="1062,370 1375,435 1375,520 1090,620 1075,590 1250,480 1055,405" fill="#2e2428"/><polygon points="1375,425 1470,405 1500,470 1380,500" fill="#f6f0ec"/><polygon points="1470,420 1560,470 1720,490 1715,505 1560,500 1480,470" fill="#eed4c6"/><polygon points="1500,480 1560,540 1680,565 1675,580 1550,565 1490,500" fill="#eed4c6"/><ellipse cx="1595" cy="485" rx="40" ry="28" fill="#4e3a34"/></g></g></g><clipPath id="pc3"><rect x="1310" y="290" width="112" height="107.5"/></clipPath><g clip-path="url(#pc3)"><g filter="url(#bl)"><rect x="1306" y="286" width="120" height="115.5" fill="#f4ebe8"/><g transform="translate(1305 285) scale(0.115848)"><rect x="42" y="45" width="966" height="928" fill="#f4ebe8"/><rect x="42" y="45" width="320" height="928" fill="#f7f0ed"/><rect x="100" y="45" width="6" height="928" fill="#eee4e0" opacity="0.8"/><rect x="160" y="45" width="6" height="928" fill="#eee4e0" opacity="0.8"/><rect x="220" y="45" width="6" height="928" fill="#eee4e0" opacity="0.8"/><rect x="280" y="45" width="6" height="928" fill="#eee4e0" opacity="0.8"/><rect x="340" y="45" width="6" height="928" fill="#eee4e0" opacity="0.8"/><rect x="368" y="45" width="22" height="928" fill="#c89a5c"/><rect x="620" y="110" width="20" height="863" fill="#cfa264"/><rect x="696" y="85" width="24" height="888" fill="#c8995a"/><rect x="45" y="95" width="50" height="270" fill="#f1ead8"/><rect x="95" y="205" width="90" height="60" fill="#f3eddd"/><rect x="180" y="215" width="680" height="34" fill="#f8f4e8"/><ellipse cx="852" cy="233" rx="20" ry="20" fill="#e8c8a0"/><rect x="255" y="250" width="36" height="120" fill="#f1ead8"/><rect x="290" y="296" width="510" height="22" fill="#f9f6ee"/><rect x="590" y="200" width="130" height="40" fill="#f4f2f0"/><rect x="600" y="295" width="140" height="26" fill="#f0eeee"/><rect x="690" y="190" width="30" height="30" fill="#4a3038"/><rect x="805" y="190" width="28" height="32" fill="#4a3038"/><rect x="655" y="285" width="22" height="18" fill="#4a3038"/><rect x="725" y="285" width="22" height="18" fill="#4a3038"/><rect x="350" y="390" width="30" height="60" fill="#e8e0dc"/><rect x="380" y="405" width="340" height="16" fill="#f4efe8"/><ellipse cx="318" cy="356" rx="22" ry="28" fill="#f29a9a"/><rect x="200" y="330" width="30" height="50" fill="#f4d4d4" opacity="0.7"/><polygon points="160,705 190,680 520,440 600,420 610,470 420,640 185,745" fill="#f5dfd4"/><polygon points="185,470 235,470 350,545 560,545 590,600 400,655 320,600 210,520" fill="#f4dcd0"/><polygon points="190,470 220,480 215,570 185,585" fill="#f6e4dc"/><polygon points="555,520 612,415 745,480 825,565 705,632" fill="#dee8f0"/><polygon points="745,480 790,300 815,295 812,500 790,530" fill="#f3d9cc"/><polygon points="700,620 760,640 600,775 520,760 505,700 540,700 560,745 620,735" fill="#f3d9cc"/><ellipse cx="870" cy="635" rx="55" ry="50" fill="#efc8b4"/><ellipse cx="905" cy="620" rx="38" ry="48" fill="#b27c54"/><rect x="590" y="605" width="80" height="14" fill="#d8d4d4"/></g></g></g><rect x="1050" y="406" width="15" height="14.8" fill="#d62a28" /><rect x="1065" y="420.8" width="14.6" height="14.6" fill="#24388a" /><rect x="1161" y="406" width="15" height="14.8" fill="#d62a28" /><rect x="1176" y="420.8" width="14.6" height="14.6" fill="#24388a" /><rect x="1272" y="406" width="15" height="14.8" fill="#d62a28" /><rect x="1287" y="420.8" width="14.6" height="14.6" fill="#24388a" /><rect x="1383.7" y="406" width="15" height="14.8" fill="#d62a28" /><rect x="1398.7" y="420.8" width="14.6" height="14.6" fill="#24388a" /><rect x="1050" y="515.5" width="15" height="14.6" fill="#d62a28" /><rect x="1065" y="530" width="14.6" height="15" fill="#24388a" /><rect x="1161" y="515.5" width="15" height="14.6" fill="#d62a28" /><rect x="1176" y="530" width="14.6" height="15" fill="#24388a" /><rect x="991" y="437" width="8" height="28" fill="#dedee0" /><rect x="1001" y="437" width="5" height="24" fill="#dedee0" /><rect x="1013" y="437" width="10" height="30" fill="#dedee0" /><rect x="1021" y="469" width="5" height="16" fill="#dedee0" /><rect x="1027" y="437" width="8" height="28" fill="#dedee0" /><rect x="1029" y="469" width="8" height="22" fill="#dedee0" /><rect x="1040" y="437" width="7" height="30" fill="#dedee0" /><rect x="1046" y="469" width="7" height="26" fill="#dedee0" /><rect x="1050" y="437" width="4" height="20" fill="#dedee0" /><rect x="1058" y="439" width="3" height="24" fill="#e04038" opacity=".7"/><rect x="1063" y="439" width="3.4" height="48" fill="#3a4a9e" opacity=".7"/><clipPath id="pc4"><rect x="1105" y="437" width="45" height="46"/></clipPath><g clip-path="url(#pc4)"><g filter="url(#bl2)"><rect x="1101" y="433" width="53" height="54" fill="#fbfbfd"/><g transform="translate(1095 425) scale(0.099108)"><rect x="100" y="120" width="455" height="465" fill="#fbfbfd"/><rect x="100" y="180" width="455" height="36" fill="#b4c0e2" opacity="0.8"/><rect x="100" y="375" width="455" height="36" fill="#bcc6e6" opacity="0.8"/><rect x="240" y="540" width="315" height="36" fill="#4c5aa8"/><rect x="100" y="540" width="140" height="36" fill="#d8dcec"/><rect x="235" y="120" width="26" height="465" fill="#4a52a2"/><rect x="440" y="120" width="30" height="70" fill="#4a52a2"/><rect x="440" y="180" width="115" height="30" fill="#5a62ac"/><rect x="415" y="190" width="12" height="390" fill="#8e9cd0" opacity="0.7"/><rect x="440" y="265" width="36" height="320" fill="#dcc29c"/><rect x="190" y="280" width="260" height="20" fill="#ead8c0"/><rect x="178" y="150" width="24" height="400" fill="#e6c8ae"/><polygon points="200,400 300,420 345,460 300,500 200,490" fill="#dfc0a0"/><ellipse cx="325" cy="465" rx="22" ry="22" fill="#e8cdb8"/><rect x="110" y="300" width="70" height="200" fill="#f3f3f6"/></g></g></g><rect x="1154" y="437" width="13" height="55" fill="#cfcfd2" /><rect x="1156" y="492" width="9" height="6" fill="#d8d8da" /><rect x="1170" y="440" width="4.2" height="42.5" fill="#e04038" opacity=".72"/><rect x="1176" y="437.5" width="4.2" height="46.5" fill="#3a4a9e" opacity=".75"/><clipPath id="pc5"><rect x="1216" y="437" width="46" height="46"/></clipPath><g clip-path="url(#pc5)"><g filter="url(#bl2)"><rect x="1212" y="433" width="54" height="54" fill="#5a4e52"/><g transform="translate(1095 425) scale(0.099108)"><rect x="1220" y="120" width="465" height="465" fill="#5a4e52"/><rect x="1220" y="120" width="110" height="465" fill="#8c8486"/><rect x="1220" y="240" width="110" height="230" fill="#a09a9c"/><rect x="1335" y="120" width="14" height="465" fill="#b8b0b0" opacity="0.75"/><rect x="1368" y="120" width="14" height="465" fill="#b8b0b0" opacity="0.75"/><rect x="1401" y="120" width="14" height="465" fill="#b8b0b0" opacity="0.75"/><rect x="1434" y="120" width="14" height="465" fill="#b8b0b0" opacity="0.75"/><rect x="1467" y="120" width="14" height="465" fill="#b8b0b0" opacity="0.75"/><rect x="1500" y="120" width="14" height="465" fill="#b8b0b0" opacity="0.75"/><rect x="1533" y="120" width="14" height="465" fill="#b8b0b0" opacity="0.75"/><rect x="1560" y="120" width="125" height="320" fill="#38282f"/><rect x="1560" y="430" width="125" height="155" fill="#b4ac9e"/><rect x="1640" y="440" width="45" height="145" fill="#c8c0b0"/><polygon points="1285,340 1470,350 1520,330 1590,345 1580,385 1500,390 1440,375 1290,360" fill="#2a2226"/><polygon points="1470,370 1560,350 1580,372 1500,392" fill="#e8e0dc"/><ellipse cx="1325" cy="440" rx="14" ry="12" fill="#e8a898"/></g></g></g><rect x="1265" y="437" width="13.8" height="56" fill="#cfcfd2" /><rect x="1267" y="493" width="10" height="4" fill="#d8d8da" /><rect x="1281" y="440" width="3.8" height="11" fill="#e04038" opacity=".75"/><rect x="1287" y="438" width="4.2" height="55" fill="#3a4a9e" opacity=".7"/><clipPath id="pc6"><rect x="1339" y="437" width="46" height="46"/></clipPath><g clip-path="url(#pc6)"><g filter="url(#bl2)"><rect x="1335" y="433" width="54" height="54" fill="#ebe0dc"/><g transform="translate(1260 425) scale(0.099108)"><rect x="798" y="120" width="462" height="465" fill="#ebe0dc"/><rect x="1180" y="120" width="80" height="465" fill="#f2eaea"/><rect x="930" y="120" width="260" height="66" fill="#e6dac0"/><rect x="940" y="130" width="240" height="8" fill="#cbb890"/><polygon points="865,125 890,125 960,585 935,585" fill="#caa264"/><rect x="1150" y="340" width="50" height="245" fill="#e4dcd8"/><rect x="1060" y="560" width="95" height="22" fill="#4a5aa8"/><polygon points="930,370 1030,372 1032,440 935,440" fill="#2c2428"/><polygon points="960,480 1030,478 1032,582 990,582" fill="#2c2428"/><polygon points="800,245 920,250 935,360 800,380" fill="#d2d9e4"/><polygon points="890,255 1000,215 1110,260 1120,330 1000,360 900,350" fill="#f1ddd2"/><polygon points="1090,200 1140,190 1160,330 1140,490 1100,470 1120,330" fill="#f0d8cc"/><ellipse cx="1150" cy="300" rx="42" ry="50" fill="#70564c"/></g></g></g><rect x="1388.3" y="437.5" width="7.5" height="56" fill="#dadadc" /><rect x="1398.3" y="438" width="4.6" height="26.6" fill="#3a4a9e" opacity=".7"/><rect x="1398.3" y="467" width="4.4" height="13" fill="#e04038" opacity=".72"/><rect x="1088" y="505.5" width="111" height="1.2" fill="#7a86b0" opacity=".8"/><rect x="1214" y="505.5" width="90" height="0.8" fill="#a89888" opacity=".7"/><rect x="1310" y="505.5" width="112" height="0.8" fill="#c8c0b8" /><rect x="1005" y="547" width="3" height="4" fill="#e2e2e4" /><rect x="1005" y="553" width="6" height="36" fill="#e2e2e4" /><rect x="1015" y="554" width="8" height="40" fill="#e2e2e4" /><rect x="1026" y="554" width="7" height="40" fill="#e2e2e4" /><rect x="1033" y="548" width="21" height="2" fill="#e2e2e4" /><rect x="1034" y="554" width="7" height="28" fill="#e2e2e4" /><rect x="1043" y="554" width="6" height="42" fill="#e2e2e4" /><rect x="1051" y="554" width="3" height="30" fill="#e2e2e4" /><rect x="1064" y="548" width="4.5" height="54" fill="#3a4a9e" opacity=".7"/><rect x="1101" y="547" width="45" height="45" fill="#eeecec" /><rect x="1120" y="547" width="3" height="45" fill="#5a5aa8" opacity=".9"/><rect x="1113" y="559" width="33" height="5" fill="#ecd8c8" /><rect x="1113" y="577" width="33" height="6" fill="#ecd8c8" /><rect x="1120" y="588" width="26" height="2.4" fill="#5a5aa8" opacity=".7"/><rect x="1151.5" y="547" width="9" height="60" fill="#dcdcde" /><rect x="1169.5" y="548" width="3.4" height="59" fill="#e04038" opacity=".75"/><rect x="1175.5" y="548" width="4" height="44" fill="#3a4a9e" opacity=".75"/><rect x="1210" y="515" width="66" height="29" fill="#d6d6d8" /><rect x="1239" y="547" width="37" height="28" fill="#d8d8da" /><rect x="1237.5" y="565" width="1.5" height="10" fill="#d8d8da" /><clipPath id="pc7"><rect x="1310" y="508" width="112" height="109"/></clipPath><g clip-path="url(#pc7)"><g filter="url(#bl)"><rect x="1306" y="504" width="120" height="117" fill="#faf7f7"/><g transform="translate(1305 503) scale(0.119847)"><rect x="42" y="40" width="933" height="910" fill="#faf7f7"/><rect x="42" y="40" width="110" height="910" fill="#f4f0f0"/><rect x="545" y="110" width="320" height="170" fill="#fdfdfd"/><rect x="585" y="120" width="70" height="48" fill="#c9c1c1"/><rect x="675" y="120" width="70" height="48" fill="#c9c1c1"/><rect x="585" y="195" width="70" height="48" fill="#c9c1c1"/><rect x="675" y="195" width="70" height="48" fill="#c9c1c1"/><rect x="790" y="130" width="70" height="110" fill="#ece8e8"/><rect x="230" y="118" width="32" height="55" fill="#cfc8c8"/><rect x="230" y="190" width="32" height="55" fill="#d4cdcd"/><rect x="560" y="860" width="180" height="90" fill="#f0ecec"/><rect x="235" y="405" width="740" height="35" fill="#6e6db2"/><rect x="235" y="440" width="740" height="40" fill="#4d4b96"/><rect x="235" y="480" width="740" height="42" fill="#3d3b82"/><rect x="235" y="522" width="740" height="38" fill="#5957a0"/><rect x="235" y="560" width="740" height="22" fill="#9090c6"/><polygon points="150,40 205,40 222,400 225,950 150,950 178,500" fill="#46458e"/><polygon points="765,40 795,40 780,300 795,950 755,950 750,400" fill="#4a4992"/><rect x="685" y="395" width="25" height="555" fill="#e9caa2"/><rect x="725" y="600" width="25" height="350" fill="#e4c49c"/><rect x="145" y="695" width="475" height="40" fill="#ece2cf"/><rect x="150" y="810" width="430" height="38" fill="#ece2cf"/><rect x="545" y="688" width="75" height="55" fill="#d9d7d5"/><rect x="505" y="800" width="75" height="60" fill="#d2d0ce"/><rect x="620" y="700" width="90" height="14" fill="#e0dedc"/><rect x="580" y="815" width="120" height="16" fill="#c8c6c4"/><rect x="95" y="610" width="36" height="320" fill="#d8c4ac"/><rect x="100" y="625" width="10" height="290" fill="#8a6a4a" opacity="0.8"/><polygon points="470,565 540,545 690,570 715,620 682,690 622,702 590,640 480,600" fill="#6b5952"/></g></g></g><rect x="929.5" y="617" width="540" height="1.2" fill="#20e020" /><rect x="937" y="628" width="186" height="7" fill="#fff" stroke="#777" stroke-width=".5"/><defs><linearGradient id="gs" x1="0" x2="1"><stop offset="0" stop-color="#888"/><stop offset=".55" stop-color="#444"/><stop offset=".62" stop-color="#ddd"/><stop offset="1" stop-color="#111"/></linearGradient></defs><rect x="955" y="629" width="108" height="6" fill="url(#gs)" /><rect x="938" y="624.5" width="110" height="1" fill="#c8c8c8" /><path d="M1003.3 645 V639.5 A5.5 5.5 0 0 1 1014.3 639.5 V645" fill="#fff" stroke="#f01818" stroke-width="1.2"/><path d="M1383.3 645 V639.5 A5.5 5.5 0 0 1 1394.3 639.5 V645" fill="#fff" stroke="#f01818" stroke-width="1.2"/><text x="1199" y="439" font-family="Liberation Serif, serif" font-style="italic" font-weight="bold" font-size="12" fill="#38e020">Press</text><text x="1198.5" y="448.5" font-family="Liberation Serif, serif" font-style="italic" font-weight="bold" font-size="12" fill="#f0281c">Plate<tspan fill="#ecc400" font-weight="normal">script</tspan></text></g></svg>
<svg class="a" style="left:420px;top:755px" width="91" height="71" viewBox="926.5 225.5 546 421" preserveAspectRatio="none" font-family="Liberation Sans, sans-serif"><filter id="bl" x="-5%" y="-5%" width="110%" height="110%"><feGaussianBlur stdDeviation="0.9"/></filter><filter id="bl2" x="-5%" y="-5%" width="110%" height="110%"><feGaussianBlur stdDeviation="0.5"/></filter><rect x="927.5" y="226.5" width="544" height="419" fill="#fff" stroke="#f01818" stroke-width="1.2"/><rect x="929.5" y="236" width="540" height="386.5" fill="none" stroke="#f4ec10" stroke-width="1.2"/><rect x="976" y="285" width="2.6" height="3" fill="#ffe800" /><rect x="978.6" y="285" width="2.6" height="3" fill="#222" /><rect x="981.2" y="285" width="2.6" height="3" fill="#10a8e8" /><rect x="983.8" y="285" width="2.6" height="3" fill="#e0108c" /><rect x="986.4" y="285" width="2.6" height="3" fill="#888" /><rect x="989" y="285" width="2.6" height="3" fill="#10a8e8" /><rect x="991.6" y="285" width="2.6" height="3" fill="#333" /><rect x="994.2" y="285" width="2.6" height="3" fill="#e0108c" /><rect x="996.8" y="285" width="2.6" height="3" fill="#ffe800" /><rect x="999.4" y="285" width="2.6" height="3" fill="#555" /><rect x="1002" y="285" width="2.6" height="3" fill="#ffe800" /><rect x="1004.6" y="285" width="2.6" height="3" fill="#222" /><rect x="1007.2" y="285" width="2.6" height="3" fill="#10a8e8" /><rect x="1009.8" y="285" width="2.6" height="3" fill="#e0108c" /><rect x="1012.4" y="285" width="2.6" height="3" fill="#888" /><rect x="1015" y="285" width="2.6" height="3" fill="#10a8e8" /><rect x="1017.6" y="285" width="2.6" height="3" fill="#333" /><rect x="1020.2" y="285" width="2.6" height="3" fill="#e0108c" /><rect x="1022.8" y="285" width="2.6" height="3" fill="#ffe800" /><rect x="1025.4" y="285" width="2.6" height="3" fill="#555" /><rect x="1028" y="285" width="2.6" height="3" fill="#ffe800" /><rect x="1030.6" y="285" width="2.6" height="3" fill="#222" /><rect x="1033.2" y="285" width="2.6" height="3" fill="#10a8e8" /><rect x="1035.8" y="285" width="2.6" height="3" fill="#e0108c" /><rect x="1038.4" y="285" width="2.6" height="3" fill="#888" /><rect x="1041" y="285" width="2.6" height="3" fill="#10a8e8" /><rect x="1043.6" y="285" width="2.6" height="3" fill="#333" /><rect x="1046.2" y="285" width="2.6" height="3" fill="#e0108c" /><rect x="1048.8" y="285" width="2.6" height="3" fill="#ffe800" /><rect x="1051.4" y="285" width="2.6" height="3" fill="#555" /><rect x="1054" y="285" width="2.6" height="3" fill="#ffe800" /><rect x="1056.6" y="285" width="2.6" height="3" fill="#222" /><rect x="1059.2" y="285" width="2.6" height="3" fill="#10a8e8" /><rect x="1061.8" y="285" width="2.6" height="3" fill="#e0108c" /><rect x="1064.4" y="285" width="2.6" height="3" fill="#888" /><rect x="1067" y="285" width="2.6" height="3" fill="#10a8e8" /><rect x="1069.6" y="285" width="2.6" height="3" fill="#333" /><rect x="1072.2" y="285" width="2.6" height="3" fill="#e0108c" /><rect x="1074.8" y="285" width="2.6" height="3" fill="#ffe800" /><rect x="1077.4" y="285" width="2.6" height="3" fill="#555" /><rect x="1080" y="285" width="2.6" height="3" fill="#ffe800" /><rect x="1082.6" y="285" width="2.6" height="3" fill="#222" /><rect x="1085.2" y="285" width="2.6" height="3" fill="#10a8e8" /><rect x="1087.8" y="285" width="2.6" height="3" fill="#e0108c" /><rect x="1090.4" y="285" width="2.6" height="3" fill="#888" /><rect x="1093" y="285" width="2.6" height="3" fill="#10a8e8" /><rect x="1095.6" y="285" width="2.6" height="3" fill="#333" /><rect x="1098.2" y="285" width="2.6" height="3" fill="#e0108c" /><rect x="1100.8" y="285" width="2.6" height="3" fill="#ffe800" /><rect x="1103.4" y="285" width="2.6" height="3" fill="#555" /><rect x="1106" y="285" width="2.6" height="3" fill="#ffe800" /><rect x="1108.6" y="285" width="2.6" height="3" fill="#222" /><rect x="1111.2" y="285" width="2.6" height="3" fill="#10a8e8" /><rect x="1113.8" y="285" width="2.6" height="3" fill="#e0108c" /><rect x="1116.4" y="285" width="2.6" height="3" fill="#888" /><rect x="1119" y="285" width="2.6" height="3" fill="#10a8e8" /><rect x="1121.6" y="285" width="2.6" height="3" fill="#333" /><rect x="1124.2" y="285" width="2.6" height="3" fill="#e0108c" /><rect x="1126.8" y="285" width="2.6" height="3" fill="#ffe800" /><rect x="1129.4" y="285" width="2.6" height="3" fill="#555" /><rect x="1132" y="285" width="2.6" height="3" fill="#ffe800" /><rect x="1134.6" y="285" width="2.6" height="3" fill="#222" /><rect x="1137.2" y="285" width="2.6" height="3" fill="#10a8e8" /><rect x="1139.8" y="285" width="2.6" height="3" fill="#e0108c" /><rect x="1142.4" y="285" width="2.6" height="3" fill="#888" /><rect x="1145" y="285" width="2.6" height="3" fill="#10a8e8" /><rect x="1147.6" y="285" width="2.6" height="3" fill="#333" /><rect x="1150.2" y="285" width="2.6" height="3" fill="#e0108c" /><rect x="1152.8" y="285" width="2.6" height="3" fill="#ffe800" /><rect x="1155.4" y="285" width="2.6" height="3" fill="#555" /><rect x="1158" y="285" width="2.6" height="3" fill="#ffe800" /><rect x="1160.6" y="285" width="2.6" height="3" fill="#222" /><rect x="1163.2" y="285" width="2.6" height="3" fill="#10a8e8" /><rect x="1165.8" y="285" width="2.6" height="3" fill="#e0108c" /><rect x="1168.4" y="285" width="2.6" height="3" fill="#888" /><rect x="1171" y="285" width="2.6" height="3" fill="#10a8e8" /><rect x="1173.6" y="285" width="2.6" height="3" fill="#333" /><rect x="1176.2" y="285" width="2.6" height="3" fill="#e0108c" /><rect x="1178.8" y="285" width="2.6" height="3" fill="#ffe800" /><rect x="1181.4" y="285" width="2.6" height="3" fill="#555" /><rect x="1184" y="285" width="2.6" height="3" fill="#ffe800" /><rect x="1186.6" y="285" width="2.6" height="3" fill="#222" /><rect x="1189.2" y="285" width="2.6" height="3" fill="#10a8e8" /><rect x="1191.8" y="285" width="2.6" height="3" fill="#e0108c" /><rect x="1194.4" y="285" width="2.6" height="3" fill="#888" /><rect x="1197" y="285" width="2.6" height="3" fill="#10a8e8" /><rect x="1199.6" y="285" width="2.6" height="3" fill="#333" /><rect x="1202.2" y="285" width="2.6" height="3" fill="#e0108c" /><rect x="1204.8" y="285" width="2.6" height="3" fill="#ffe800" /><rect x="1207.4" y="285" width="2.6" height="3" fill="#555" /><rect x="1210" y="285" width="2.6" height="3" fill="#ffe800" /><rect x="1212.6" y="285" width="2.6" height="3" fill="#222" /><rect x="1215.2" y="285" width="2.6" height="3" fill="#10a8e8" /><rect x="1217.8" y="285" width="2.6" height="3" fill="#e0108c" /><rect x="1220.4" y="285" width="2.6" height="3" fill="#888" /><rect x="1223" y="285" width="2.6" height="3" fill="#10a8e8" /><rect x="1225.6" y="285" width="2.6" height="3" fill="#333" /><rect x="1228.2" y="285" width="2.6" height="3" fill="#e0108c" /><rect x="1230.8" y="285" width="2.6" height="3" fill="#ffe800" /><rect x="1233.4" y="285" width="2.6" height="3" fill="#555" /><rect x="1236" y="285" width="2.6" height="3" fill="#ffe800" /><rect x="1238.6" y="285" width="2.6" height="3" fill="#222" /><rect x="1241.2" y="285" width="2.6" height="3" fill="#10a8e8" /><rect x="1243.8" y="285" width="2.6" height="3" fill="#e0108c" /><rect x="1246.4" y="285" width="2.6" height="3" fill="#888" /><rect x="1249" y="285" width="2.6" height="3" fill="#10a8e8" /><rect x="1251.6" y="285" width="2.6" height="3" fill="#333" /><rect x="1254.2" y="285" width="2.6" height="3" fill="#e0108c" /><rect x="1256.8" y="285" width="2.6" height="3" fill="#ffe800" /><rect x="1259.4" y="285" width="2.6" height="3" fill="#555" /><rect x="1262" y="285" width="2.6" height="3" fill="#ffe800" /><rect x="1264.6" y="285" width="2.6" height="3" fill="#222" /><rect x="1267.2" y="285" width="2.6" height="3" fill="#10a8e8" /><rect x="1269.8" y="285" width="2.6" height="3" fill="#e0108c" /><rect x="1272.4" y="285" width="2.6" height="3" fill="#888" /><rect x="1275" y="285" width="2.6" height="3" fill="#10a8e8" /><rect x="1277.6" y="285" width="2.6" height="3" fill="#333" /><rect x="1280.2" y="285" width="2.6" height="3" fill="#e0108c" /><rect x="1282.8" y="285" width="2.6" height="3" fill="#ffe800" /><rect x="1285.4" y="285" width="2.6" height="3" fill="#555" /><rect x="1288" y="285" width="2.6" height="3" fill="#ffe800" /><rect x="1290.6" y="285" width="2.6" height="3" fill="#222" /><rect x="1293.2" y="285" width="2.6" height="3" fill="#10a8e8" /><rect x="1295.8" y="285" width="2.6" height="3" fill="#e0108c" /><rect x="1298.4" y="285" width="2.6" height="3" fill="#888" /><rect x="1301" y="285" width="2.6" height="3" fill="#10a8e8" /><rect x="1303.6" y="285" width="2.6" height="3" fill="#333" /><rect x="1306.2" y="285" width="2.6" height="3" fill="#e0108c" /><rect x="1308.8" y="285" width="2.6" height="3" fill="#ffe800" /><rect x="1311.4" y="285" width="2.6" height="3" fill="#555" /><rect x="1314" y="285" width="2.6" height="3" fill="#ffe800" /><rect x="1316.6" y="285" width="2.6" height="3" fill="#222" /><rect x="1319.2" y="285" width="2.6" height="3" fill="#10a8e8" /><rect x="1321.8" y="285" width="2.6" height="3" fill="#e0108c" /><rect x="1324.4" y="285" width="2.6" height="3" fill="#888" /><rect x="1327" y="285" width="2.6" height="3" fill="#10a8e8" /><rect x="1329.6" y="285" width="2.6" height="3" fill="#333" /><rect x="1332.2" y="285" width="2.6" height="3" fill="#e0108c" /><rect x="1334.8" y="285" width="2.6" height="3" fill="#ffe800" /><rect x="1337.4" y="285" width="2.6" height="3" fill="#555" /><rect x="1340" y="285" width="2.6" height="3" fill="#ffe800" /><rect x="1342.6" y="285" width="2.6" height="3" fill="#222" /><rect x="1345.2" y="285" width="2.6" height="3" fill="#10a8e8" /><rect x="1347.8" y="285" width="2.6" height="3" fill="#e0108c" /><rect x="1350.4" y="285" width="2.6" height="3" fill="#888" /><rect x="1353" y="285" width="2.6" height="3" fill="#10a8e8" /><rect x="1355.6" y="285" width="2.6" height="3" fill="#333" /><rect x="1358.2" y="285" width="2.6" height="3" fill="#e0108c" /><rect x="1360.8" y="285" width="2.6" height="3" fill="#ffe800" /><rect x="1363.4" y="285" width="2.6" height="3" fill="#555" /><rect x="1366" y="285" width="2.6" height="3" fill="#ffe800" /><rect x="1368.6" y="285" width="2.6" height="3" fill="#222" /><rect x="1371.2" y="285" width="2.6" height="3" fill="#10a8e8" /><rect x="1373.8" y="285" width="2.6" height="3" fill="#e0108c" /><rect x="1376.4" y="285" width="2.6" height="3" fill="#888" /><rect x="1379" y="285" width="2.6" height="3" fill="#10a8e8" /><rect x="1381.6" y="285" width="2.6" height="3" fill="#333" /><rect x="1384.2" y="285" width="2.6" height="3" fill="#e0108c" /><rect x="1386.8" y="285" width="2.6" height="3" fill="#ffe800" /><rect x="1389.4" y="285" width="2.6" height="3" fill="#555" /><rect x="1392" y="285" width="2.6" height="3" fill="#ffe800" /><rect x="1394.6" y="285" width="2.6" height="3" fill="#222" /><rect x="1397.2" y="285" width="2.6" height="3" fill="#10a8e8" /><rect x="1399.8" y="285" width="2.6" height="3" fill="#e0108c" /><rect x="1402.4" y="285" width="2.6" height="3" fill="#888" /><rect x="1405" y="285" width="2.6" height="3" fill="#10a8e8" /><rect x="1407.6" y="285" width="2.6" height="3" fill="#333" /><rect x="1410.2" y="285" width="2.6" height="3" fill="#e0108c" /><rect x="1412.8" y="285" width="2.6" height="3" fill="#ffe800" /><rect x="1415.4" y="285" width="2.6" height="3" fill="#555" /><rect x="1418" y="285" width="2.6" height="3" fill="#ffe800" /><rect x="1420.6" y="285" width="2.6" height="3" fill="#222" /><rect x="997" y="297" width="5" height="18" fill="#dededf" /><rect x="1003" y="297" width="20" height="30" fill="#dededf" /><rect x="1011" y="332" width="12" height="26" fill="#dededf" /><rect x="1027" y="297" width="8" height="28" fill="#dededf" /><rect x="1035" y="297" width="10" height="30" fill="#dededf" /><rect x="1029" y="330" width="16" height="28" fill="#dededf" /><rect x="1048" y="297" width="6" height="32" fill="#dededf" /><rect x="1064.2" y="297.5" width="3.6" height="52" fill="#4a58a8" opacity=".75"/><rect x="1058" y="297" width="3.4" height="80" fill="#e04038" opacity=".75"/><clipPath id="pc1"><rect x="1088" y="290" width="111" height="107"/></clipPath><g clip-path="url(#pc1)"><g filter="url(#bl)"><rect x="1084" y="286" width="119" height="115" fill="#fcfbfe"/><g transform="translate(1085 285) scale(0.126646)"><rect x="25" y="40" width="875" height="852" fill="#fcfbfe"/><rect x="25" y="40" width="90" height="852" fill="#eeeef6"/><rect x="110" y="45" width="790" height="40" fill="#4d4ca2"/><rect x="380" y="60" width="340" height="18" fill="#6a69b4"/><rect x="90" y="318" width="810" height="42" fill="#5d5cae"/><rect x="400" y="325" width="340" height="22" fill="#8886c6"/><rect x="90" y="632" width="810" height="40" fill="#5554a8"/><rect x="390" y="672" width="420" height="28" fill="#4a4aa0"/><rect x="85" y="40" width="40" height="852" fill="#4a4aa0"/><rect x="362" y="85" width="22" height="240" fill="#6665b2"/><rect x="385" y="650" width="36" height="242" fill="#4646a0"/><polygon points="715,40 748,40 840,892 805,892" fill="#5352a8"/><rect x="340" y="360" width="14" height="530" fill="#d8b898" opacity="0.8"/><polygon points="30,205 120,195 300,205 440,240 300,265 120,235 30,232" fill="#f4e2da"/><ellipse cx="340" cy="240" rx="55" ry="38" fill="#fbf4f2"/><polygon points="320,260 400,250 420,290 350,330" fill="#f2ddd4"/><polygon points="30,560 300,555 480,590 300,615 30,600" fill="#f6e8e2"/><polygon points="60,790 280,770 520,815 300,860 70,835" fill="#f1dcd0"/><ellipse cx="360" cy="815" rx="70" ry="40" fill="#fbf6f4"/><ellipse cx="500" cy="815" rx="26" ry="28" fill="#5a3c34"/><polygon points="448,125 482,125 500,480 430,480" fill="#f3ddd4"/><polygon points="430,480 470,560 215,750 175,745" fill="#f2dacf"/><polygon points="420,480 510,490 590,530 570,585 470,580 425,530" fill="#2a2228"/><polygon points="555,505 650,325 672,335 590,530" fill="#efd4c8"/><polygon points="575,560 610,560 705,715 690,735" fill="#efd4c8"/><ellipse cx="650" cy="525" rx="38" ry="34" fill="#e8c4b4"/><ellipse cx="675" cy="505" rx="30" ry="30" fill="#4a3430"/></g></g></g><clipPath id="pc2"><rect x="1199" y="290" width="111" height="107"/></clipPath><g clip-path="url(#pc2)"><g filter="url(#bl)"><rect x="1195" y="286" width="119" height="115" fill="#fbfbfb"/><g transform="translate(1085 285) scale(0.126646)"><rect x="900" y="40" width="880" height="852" fill="#fbfbfb"/><rect x="900" y="40" width="140" height="852" fill="#f1f1f2"/><rect x="1075" y="40" width="10" height="550" fill="#ececee"/><rect x="1125" y="40" width="10" height="550" fill="#ececee"/><rect x="1175" y="40" width="10" height="550" fill="#ececee"/><rect x="1225" y="40" width="10" height="550" fill="#ececee"/><rect x="1275" y="40" width="10" height="550" fill="#ececee"/><rect x="1325" y="40" width="10" height="550" fill="#ececee"/><rect x="1375" y="40" width="10" height="550" fill="#ececee"/><rect x="1425" y="40" width="10" height="550" fill="#ececee"/><rect x="1475" y="40" width="10" height="550" fill="#ececee"/><rect x="1525" y="40" width="10" height="550" fill="#ececee"/><rect x="1575" y="40" width="10" height="550" fill="#ececee"/><rect x="1625" y="40" width="10" height="550" fill="#ececee"/><rect x="1675" y="40" width="10" height="550" fill="#ececee"/><rect x="1725" y="40" width="10" height="550" fill="#ececee"/><rect x="1060" y="590" width="720" height="302" fill="#f7e9dd"/><rect x="1060" y="625" width="720" height="10" fill="#e6ccb6" opacity="0.7"/><rect x="1060" y="665" width="720" height="10" fill="#e6ccb6" opacity="0.7"/><rect x="1060" y="705" width="720" height="10" fill="#e6ccb6" opacity="0.7"/><rect x="1060" y="745" width="720" height="10" fill="#e6ccb6" opacity="0.7"/><rect x="1060" y="785" width="720" height="10" fill="#e6ccb6" opacity="0.7"/><rect x="1060" y="825" width="720" height="10" fill="#e6ccb6" opacity="0.7"/><rect x="1060" y="865" width="720" height="10" fill="#e6ccb6" opacity="0.7"/><rect x="1060" y="590" width="720" height="40" fill="#fbf4ee"/><rect x="1030" y="40" width="30" height="852" fill="#4e4a4c"/><rect x="1660" y="40" width="30" height="520" fill="#5e5a5c"/><rect x="1340" y="40" width="24" height="590" fill="#dcbc94"/><rect x="1050" y="262" width="730" height="18" fill="#6e6a6c"/><rect x="1050" y="540" width="730" height="40" fill="#aaa6a6"/><rect x="1060" y="60" width="120" height="95" fill="#e4e4e4"/><polygon points="950,335 1060,365 1070,395 985,385" fill="#e8cdbc"/><polygon points="960,600 1075,590 1085,620 985,640" fill="#e8cdbc"/><polygon points="1062,370 1375,435 1375,520 1090,620 1075,590 1250,480 1055,405" fill="#2e2428"/><polygon points="1375,425 1470,405 1500,470 1380,500" fill="#f6f0ec"/><polygon points="1470,420 1560,470 1720,490 1715,505 1560,500 1480,470" fill="#eed4c6"/><polygon points="1500,480 1560,540 1680,565 1675,580 1550,565 1490,500" fill="#eed4c6"/><ellipse cx="1595" cy="485" rx="40" ry="28" fill="#4e3a34"/></g></g></g><clipPath id="pc3"><rect x="1310" y="290" width="112" height="107.5"/></clipPath><g clip-path="url(#pc3)"><g filter="url(#bl)"><rect x="1306" y="286" width="120" height="115.5" fill="#f4ebe8"/><g transform="translate(1305 285) scale(0.115848)"><rect x="42" y="45" width="966" height="928" fill="#f4ebe8"/><rect x="42" y="45" width="320" height="928" fill="#f7f0ed"/><rect x="100" y="45" width="6" height="928" fill="#eee4e0" opacity="0.8"/><rect x="160" y="45" width="6" height="928" fill="#eee4e0" opacity="0.8"/><rect x="220" y="45" width="6" height="928" fill="#eee4e0" opacity="0.8"/><rect x="280" y="45" width="6" height="928" fill="#eee4e0" opacity="0.8"/><rect x="340" y="45" width="6" height="928" fill="#eee4e0" opacity="0.8"/><rect x="368" y="45" width="22" height="928" fill="#c89a5c"/><rect x="620" y="110" width="20" height="863" fill="#cfa264"/><rect x="696" y="85" width="24" height="888" fill="#c8995a"/><rect x="45" y="95" width="50" height="270" fill="#f1ead8"/><rect x="95" y="205" width="90" height="60" fill="#f3eddd"/><rect x="180" y="215" width="680" height="34" fill="#f8f4e8"/><ellipse cx="852" cy="233" rx="20" ry="20" fill="#e8c8a0"/><rect x="255" y="250" width="36" height="120" fill="#f1ead8"/><rect x="290" y="296" width="510" height="22" fill="#f9f6ee"/><rect x="590" y="200" width="130" height="40" fill="#f4f2f0"/><rect x="600" y="295" width="140" height="26" fill="#f0eeee"/><rect x="690" y="190" width="30" height="30" fill="#4a3038"/><rect x="805" y="190" width="28" height="32" fill="#4a3038"/><rect x="655" y="285" width="22" height="18" fill="#4a3038"/><rect x="725" y="285" width="22" height="18" fill="#4a3038"/><rect x="350" y="390" width="30" height="60" fill="#e8e0dc"/><rect x="380" y="405" width="340" height="16" fill="#f4efe8"/><ellipse cx="318" cy="356" rx="22" ry="28" fill="#f29a9a"/><rect x="200" y="330" width="30" height="50" fill="#f4d4d4" opacity="0.7"/><polygon points="160,705 190,680 520,440 600,420 610,470 420,640 185,745" fill="#f5dfd4"/><polygon points="185,470 235,470 350,545 560,545 590,600 400,655 320,600 210,520" fill="#f4dcd0"/><polygon points="190,470 220,480 215,570 185,585" fill="#f6e4dc"/><polygon points="555,520 612,415 745,480 825,565 705,632" fill="#dee8f0"/><polygon points="745,480 790,300 815,295 812,500 790,530" fill="#f3d9cc"/><polygon points="700,620 760,640 600,775 520,760 505,700 540,700 560,745 620,735" fill="#f3d9cc"/><ellipse cx="870" cy="635" rx="55" ry="50" fill="#efc8b4"/><ellipse cx="905" cy="620" rx="38" ry="48" fill="#b27c54"/><rect x="590" y="605" width="80" height="14" fill="#d8d4d4"/></g></g></g><rect x="1050" y="406" width="15" height="14.8" fill="#d62a28" /><rect x="1065" y="420.8" width="14.6" height="14.6" fill="#24388a" /><rect x="1161" y="406" width="15" height="14.8" fill="#d62a28" /><rect x="1176" y="420.8" width="14.6" height="14.6" fill="#24388a" /><rect x="1272" y="406" width="15" height="14.8" fill="#d62a28" /><rect x="1287" y="420.8" width="14.6" height="14.6" fill="#24388a" /><rect x="1383.7" y="406" width="15" height="14.8" fill="#d62a28" /><rect x="1398.7" y="420.8" width="14.6" height="14.6" fill="#24388a" /><rect x="1050" y="515.5" width="15" height="14.6" fill="#d62a28" /><rect x="1065" y="530" width="14.6" height="15" fill="#24388a" /><rect x="1161" y="515.5" width="15" height="14.6" fill="#d62a28" /><rect x="1176" y="530" width="14.6" height="15" fill="#24388a" /><rect x="991" y="437" width="8" height="28" fill="#dedee0" /><rect x="1001" y="437" width="5" height="24" fill="#dedee0" /><rect x="1013" y="437" width="10" height="30" fill="#dedee0" /><rect x="1021" y="469" width="5" height="16" fill="#dedee0" /><rect x="1027" y="437" width="8" height="28" fill="#dedee0" /><rect x="1029" y="469" width="8" height="22" fill="#dedee0" /><rect x="1040" y="437" width="7" height="30" fill="#dedee0" /><rect x="1046" y="469" width="7" height="26" fill="#dedee0" /><rect x="1050" y="437" width="4" height="20" fill="#dedee0" /><rect x="1058" y="439" width="3" height="24" fill="#e04038" opacity=".7"/><rect x="1063" y="439" width="3.4" height="48" fill="#3a4a9e" opacity=".7"/><clipPath id="pc4"><rect x="1105" y="437" width="45" height="46"/></clipPath><g clip-path="url(#pc4)"><g filter="url(#bl2)"><rect x="1101" y="433" width="53" height="54" fill="#fbfbfd"/><g transform="translate(1095 425) scale(0.099108)"><rect x="100" y="120" width="455" height="465" fill="#fbfbfd"/><rect x="100" y="180" width="455" height="36" fill="#b4c0e2" opacity="0.8"/><rect x="100" y="375" width="455" height="36" fill="#bcc6e6" opacity="0.8"/><rect x="240" y="540" width="315" height="36" fill="#4c5aa8"/><rect x="100" y="540" width="140" height="36" fill="#d8dcec"/><rect x="235" y="120" width="26" height="465" fill="#4a52a2"/><rect x="440" y="120" width="30" height="70" fill="#4a52a2"/><rect x="440" y="180" width="115" height="30" fill="#5a62ac"/><rect x="415" y="190" width="12" height="390" fill="#8e9cd0" opacity="0.7"/><rect x="440" y="265" width="36" height="320" fill="#dcc29c"/><rect x="190" y="280" width="260" height="20" fill="#ead8c0"/><rect x="178" y="150" width="24" height="400" fill="#e6c8ae"/><polygon points="200,400 300,420 345,460 300,500 200,490" fill="#dfc0a0"/><ellipse cx="325" cy="465" rx="22" ry="22" fill="#e8cdb8"/><rect x="110" y="300" width="70" height="200" fill="#f3f3f6"/></g></g></g><rect x="1154" y="437" width="13" height="55" fill="#cfcfd2" /><rect x="1156" y="492" width="9" height="6" fill="#d8d8da" /><rect x="1170" y="440" width="4.2" height="42.5" fill="#e04038" opacity=".72"/><rect x="1176" y="437.5" width="4.2" height="46.5" fill="#3a4a9e" opacity=".75"/><clipPath id="pc5"><rect x="1216" y="437" width="46" height="46"/></clipPath><g clip-path="url(#pc5)"><g filter="url(#bl2)"><rect x="1212" y="433" width="54" height="54" fill="#5a4e52"/><g transform="translate(1095 425) scale(0.099108)"><rect x="1220" y="120" width="465" height="465" fill="#5a4e52"/><rect x="1220" y="120" width="110" height="465" fill="#8c8486"/><rect x="1220" y="240" width="110" height="230" fill="#a09a9c"/><rect x="1335" y="120" width="14" height="465" fill="#b8b0b0" opacity="0.75"/><rect x="1368" y="120" width="14" height="465" fill="#b8b0b0" opacity="0.75"/><rect x="1401" y="120" width="14" height="465" fill="#b8b0b0" opacity="0.75"/><rect x="1434" y="120" width="14" height="465" fill="#b8b0b0" opacity="0.75"/><rect x="1467" y="120" width="14" height="465" fill="#b8b0b0" opacity="0.75"/><rect x="1500" y="120" width="14" height="465" fill="#b8b0b0" opacity="0.75"/><rect x="1533" y="120" width="14" height="465" fill="#b8b0b0" opacity="0.75"/><rect x="1560" y="120" width="125" height="320" fill="#38282f"/><rect x="1560" y="430" width="125" height="155" fill="#b4ac9e"/><rect x="1640" y="440" width="45" height="145" fill="#c8c0b0"/><polygon points="1285,340 1470,350 1520,330 1590,345 1580,385 1500,390 1440,375 1290,360" fill="#2a2226"/><polygon points="1470,370 1560,350 1580,372 1500,392" fill="#e8e0dc"/><ellipse cx="1325" cy="440" rx="14" ry="12" fill="#e8a898"/></g></g></g><rect x="1265" y="437" width="13.8" height="56" fill="#cfcfd2" /><rect x="1267" y="493" width="10" height="4" fill="#d8d8da" /><rect x="1281" y="440" width="3.8" height="11" fill="#e04038" opacity=".75"/><rect x="1287" y="438" width="4.2" height="55" fill="#3a4a9e" opacity=".7"/><clipPath id="pc6"><rect x="1339" y="437" width="46" height="46"/></clipPath><g clip-path="url(#pc6)"><g filter="url(#bl2)"><rect x="1335" y="433" width="54" height="54" fill="#ebe0dc"/><g transform="translate(1260 425) scale(0.099108)"><rect x="798" y="120" width="462" height="465" fill="#ebe0dc"/><rect x="1180" y="120" width="80" height="465" fill="#f2eaea"/><rect x="930" y="120" width="260" height="66" fill="#e6dac0"/><rect x="940" y="130" width="240" height="8" fill="#cbb890"/><polygon points="865,125 890,125 960,585 935,585" fill="#caa264"/><rect x="1150" y="340" width="50" height="245" fill="#e4dcd8"/><rect x="1060" y="560" width="95" height="22" fill="#4a5aa8"/><polygon points="930,370 1030,372 1032,440 935,440" fill="#2c2428"/><polygon points="960,480 1030,478 1032,582 990,582" fill="#2c2428"/><polygon points="800,245 920,250 935,360 800,380" fill="#d2d9e4"/><polygon points="890,255 1000,215 1110,260 1120,330 1000,360 900,350" fill="#f1ddd2"/><polygon points="1090,200 1140,190 1160,330 1140,490 1100,470 1120,330" fill="#f0d8cc"/><ellipse cx="1150" cy="300" rx="42" ry="50" fill="#70564c"/></g></g></g><rect x="1388.3" y="437.5" width="7.5" height="56" fill="#dadadc" /><rect x="1398.3" y="438" width="4.6" height="26.6" fill="#3a4a9e" opacity=".7"/><rect x="1398.3" y="467" width="4.4" height="13" fill="#e04038" opacity=".72"/><rect x="1088" y="505.5" width="111" height="1.2" fill="#7a86b0" opacity=".8"/><rect x="1214" y="505.5" width="90" height="0.8" fill="#a89888" opacity=".7"/><rect x="1310" y="505.5" width="112" height="0.8" fill="#c8c0b8" /><rect x="1005" y="547" width="3" height="4" fill="#e2e2e4" /><rect x="1005" y="553" width="6" height="36" fill="#e2e2e4" /><rect x="1015" y="554" width="8" height="40" fill="#e2e2e4" /><rect x="1026" y="554" width="7" height="40" fill="#e2e2e4" /><rect x="1033" y="548" width="21" height="2" fill="#e2e2e4" /><rect x="1034" y="554" width="7" height="28" fill="#e2e2e4" /><rect x="1043" y="554" width="6" height="42" fill="#e2e2e4" /><rect x="1051" y="554" width="3" height="30" fill="#e2e2e4" /><rect x="1064" y="548" width="4.5" height="54" fill="#3a4a9e" opacity=".7"/><rect x="1101" y="547" width="45" height="45" fill="#eeecec" /><rect x="1120" y="547" width="3" height="45" fill="#5a5aa8" opacity=".9"/><rect x="1113" y="559" width="33" height="5" fill="#ecd8c8" /><rect x="1113" y="577" width="33" height="6" fill="#ecd8c8" /><rect x="1120" y="588" width="26" height="2.4" fill="#5a5aa8" opacity=".7"/><rect x="1151.5" y="547" width="9" height="60" fill="#dcdcde" /><rect x="1169.5" y="548" width="3.4" height="59" fill="#e04038" opacity=".75"/><rect x="1175.5" y="548" width="4" height="44" fill="#3a4a9e" opacity=".75"/><rect x="1210" y="515" width="66" height="29" fill="#d6d6d8" /><rect x="1239" y="547" width="37" height="28" fill="#d8d8da" /><rect x="1237.5" y="565" width="1.5" height="10" fill="#d8d8da" /><clipPath id="pc7"><rect x="1310" y="508" width="112" height="109"/></clipPath><g clip-path="url(#pc7)"><g filter="url(#bl)"><rect x="1306" y="504" width="120" height="117" fill="#faf7f7"/><g transform="translate(1305 503) scale(0.119847)"><rect x="42" y="40" width="933" height="910" fill="#faf7f7"/><rect x="42" y="40" width="110" height="910" fill="#f4f0f0"/><rect x="545" y="110" width="320" height="170" fill="#fdfdfd"/><rect x="585" y="120" width="70" height="48" fill="#c9c1c1"/><rect x="675" y="120" width="70" height="48" fill="#c9c1c1"/><rect x="585" y="195" width="70" height="48" fill="#c9c1c1"/><rect x="675" y="195" width="70" height="48" fill="#c9c1c1"/><rect x="790" y="130" width="70" height="110" fill="#ece8e8"/><rect x="230" y="118" width="32" height="55" fill="#cfc8c8"/><rect x="230" y="190" width="32" height="55" fill="#d4cdcd"/><rect x="560" y="860" width="180" height="90" fill="#f0ecec"/><rect x="235" y="405" width="740" height="35" fill="#6e6db2"/><rect x="235" y="440" width="740" height="40" fill="#4d4b96"/><rect x="235" y="480" width="740" height="42" fill="#3d3b82"/><rect x="235" y="522" width="740" height="38" fill="#5957a0"/><rect x="235" y="560" width="740" height="22" fill="#9090c6"/><polygon points="150,40 205,40 222,400 225,950 150,950 178,500" fill="#46458e"/><polygon points="765,40 795,40 780,300 795,950 755,950 750,400" fill="#4a4992"/><rect x="685" y="395" width="25" height="555" fill="#e9caa2"/><rect x="725" y="600" width="25" height="350" fill="#e4c49c"/><rect x="145" y="695" width="475" height="40" fill="#ece2cf"/><rect x="150" y="810" width="430" height="38" fill="#ece2cf"/><rect x="545" y="688" width="75" height="55" fill="#d9d7d5"/><rect x="505" y="800" width="75" height="60" fill="#d2d0ce"/><rect x="620" y="700" width="90" height="14" fill="#e0dedc"/><rect x="580" y="815" width="120" height="16" fill="#c8c6c4"/><rect x="95" y="610" width="36" height="320" fill="#d8c4ac"/><rect x="100" y="625" width="10" height="290" fill="#8a6a4a" opacity="0.8"/><polygon points="470,565 540,545 690,570 715,620 682,690 622,702 590,640 480,600" fill="#6b5952"/></g></g></g><rect x="929.5" y="617" width="540" height="1.2" fill="#20e020" /><rect x="937" y="628" width="186" height="7" fill="#fff" stroke="#777" stroke-width=".5"/><defs><linearGradient id="gs2" x1="0" x2="1"><stop offset="0" stop-color="#888"/><stop offset=".55" stop-color="#444"/><stop offset=".62" stop-color="#ddd"/><stop offset="1" stop-color="#111"/></linearGradient></defs><rect x="955" y="629" width="108" height="6" fill="url(#gs2)" /><rect x="938" y="624.5" width="110" height="1" fill="#c8c8c8" /><path d="M1003.3 645 V639.5 A5.5 5.5 0 0 1 1014.3 639.5 V645" fill="#fff" stroke="#f01818" stroke-width="1.2"/><path d="M1383.3 645 V639.5 A5.5 5.5 0 0 1 1394.3 639.5 V645" fill="#fff" stroke="#f01818" stroke-width="1.2"/><text x="1199" y="439" font-family="Liberation Serif, serif" font-style="italic" font-weight="bold" font-size="12" fill="#38e020">Press</text><text x="1198.5" y="448.5" font-family="Liberation Serif, serif" font-style="italic" font-weight="bold" font-size="12" fill="#f0281c">Plate<tspan fill="#ecc400" font-weight="normal">script</tspan></text><rect x="927.5" y="226.5" width="544" height="419" fill="none" stroke="#e86a50" stroke-width="6"/></svg>
<div class="a" style="left:573px;top:675px;width:1234px;height:1px;background:#d4d4d8"></div>
<div class="a" style="left:573px;top:676px;width:1234px;height:5px;background:#97979d"></div>
<div class="a" style="left:573px;top:681px;width:1234px;height:1px;background:#2a2a30"></div>
<svg class="a" style="left:1150px;top:675px" width="80" height="7"><polygon points="2,6.5 11,6.5 6.5,1.5" fill="#55565e"/><polygon points="66,1.5 75,1.5 70.5,6.5" fill="#55565e"/><g fill="#4a4a53"><rect x="29" y="2.5" width="2" height="2"/><rect x="33" y="2.5" width="2" height="2"/><rect x="37" y="2.5" width="2" height="2"/><rect x="41" y="2.5" width="2" height="2"/><rect x="45" y="2.5" width="2" height="2"/></g></svg>
<div class="a" style="left:573px;top:682px;width:1234px;height:227px;border-left:1px solid #8d8e95;border-right:1px solid #2e2e34"></div>
<svg class="a" style="left:574px;top:683px" width="1232" height="225" viewBox="574 683 1232 225" font-family="Liberation Sans, sans-serif" font-size="11"><path d="M620 692.5 H1796 M620 711.5 H1796 M620 730.5 H1796 M620 750.5 H1796 M620 769.5 H1796 M620 788.5 H1796 M620 807.5 H1796 M620 826.5 H1796 M620 846.5 H1796 M620 865.5 H1796 M656.5 692 V884 M693.5 692 V884 M730.5 692 V884 M767.5 692 V884 M803.5 692 V884 M840.5 692 V884 M877.5 692 V884 M914.5 692 V884 M950.5 692 V884 M987.5 692 V884 M1024.5 692 V884 M1061.5 692 V884 M1097.5 692 V884 M1134.5 692 V884 M1171.5 692 V884 M1208.5 692 V884 M1244.5 692 V884 M1281.5 692 V884 M1318.5 692 V884 M1355.5 692 V884 M1391.5 692 V884 M1428.5 692 V884 M1465.5 692 V884 M1502.5 692 V884 M1538.5 692 V884 M1575.5 692 V884 M1612.5 692 V884 M1649.5 692 V884 M1685.5 692 V884 M1722.5 692 V884 M1759.5 692 V884 " stroke="#c2c2c6" stroke-width="1" stroke-dasharray="2 2" fill="none" shape-rendering="crispEdges"/><path d="M619.5 692 V884.5 H1796" stroke="#c4c4c8" stroke-width="1" fill="none" shape-rendering="crispEdges"/><path d="M1796.5 692 V884" stroke="#686970" stroke-width="1" fill="none" shape-rendering="crispEdges"/><path d="M617 884.5 H620" stroke="#c4c4c8" stroke-width="1" shape-rendering="crispEdges"/><text x="614" y="888.0" text-anchor="end" fill="#fff">0</text><path d="M617 865.5 H620" stroke="#c4c4c8" stroke-width="1" shape-rendering="crispEdges"/><text x="614" y="868.8" text-anchor="end" fill="#fff">10</text><path d="M617 846.5 H620" stroke="#c4c4c8" stroke-width="1" shape-rendering="crispEdges"/><text x="614" y="849.6" text-anchor="end" fill="#fff">20</text><path d="M617 826.5 H620" stroke="#c4c4c8" stroke-width="1" shape-rendering="crispEdges"/><text x="614" y="830.4" text-anchor="end" fill="#fff">30</text><path d="M617 807.5 H620" stroke="#c4c4c8" stroke-width="1" shape-rendering="crispEdges"/><text x="614" y="811.2" text-anchor="end" fill="#fff">40</text><path d="M617 788.5 H620" stroke="#c4c4c8" stroke-width="1" shape-rendering="crispEdges"/><text x="614" y="792.0" text-anchor="end" fill="#fff">50</text><path d="M617 769.5 H620" stroke="#c4c4c8" stroke-width="1" shape-rendering="crispEdges"/><text x="614" y="772.8" text-anchor="end" fill="#fff">60</text><path d="M617 750.5 H620" stroke="#c4c4c8" stroke-width="1" shape-rendering="crispEdges"/><text x="614" y="753.6" text-anchor="end" fill="#fff">70</text><path d="M617 730.5 H620" stroke="#c4c4c8" stroke-width="1" shape-rendering="crispEdges"/><text x="614" y="734.4" text-anchor="end" fill="#fff">80</text><path d="M617 711.5 H620" stroke="#c4c4c8" stroke-width="1" shape-rendering="crispEdges"/><text x="614" y="715.2" text-anchor="end" fill="#fff">90</text><path d="M617 692.5 H620" stroke="#c4c4c8" stroke-width="1" shape-rendering="crispEdges"/><text x="614" y="696.0" text-anchor="end" fill="#fff">100</text><text x="637.2" y="899" text-anchor="middle" fill="#fff">1</text><text x="673.9" y="899" text-anchor="middle" fill="#fff">2</text><text x="710.7" y="899" text-anchor="middle" fill="#fff">3</text><text x="747.4" y="899" text-anchor="middle" fill="#fff">4</text><text x="784.2" y="899" text-anchor="middle" fill="#fff">5</text><text x="820.9" y="899" text-anchor="middle" fill="#fff">6</text><text x="857.7" y="899" text-anchor="middle" fill="#fff">7</text><text x="894.4" y="899" text-anchor="middle" fill="#fff">8</text><text x="931.2" y="899" text-anchor="middle" fill="#fff">9</text><text x="967.9" y="899" text-anchor="middle" fill="#fff">10</text><text x="1004.7" y="899" text-anchor="middle" fill="#fff">11</text><text x="1041.4" y="899" text-anchor="middle" fill="#fff">12</text><text x="1078.2" y="899" text-anchor="middle" fill="#fff">13</text><text x="1114.9" y="899" text-anchor="middle" fill="#fff">14</text><text x="1151.7" y="899" text-anchor="middle" fill="#fff">15</text><text x="1188.4" y="899" text-anchor="middle" fill="#fff">16</text><text x="1225.2" y="899" text-anchor="middle" fill="#fff">17</text><text x="1261.9" y="899" text-anchor="middle" fill="#fff">18</text><text x="1298.7" y="899" text-anchor="middle" fill="#fff">19</text><text x="1335.4" y="899" text-anchor="middle" fill="#fff">20</text><text x="1372.2" y="899" text-anchor="middle" fill="#fff">21</text><text x="1408.9" y="899" text-anchor="middle" fill="#fff">22</text><text x="1445.7" y="899" text-anchor="middle" fill="#fff">23</text><text x="1482.4" y="899" text-anchor="middle" fill="#fff">24</text><text x="1519.2" y="899" text-anchor="middle" fill="#fff">25</text><text x="1555.9" y="899" text-anchor="middle" fill="#fff">26</text><text x="1592.7" y="899" text-anchor="middle" fill="#fff">27</text><text x="1629.4" y="899" text-anchor="middle" fill="#fff">28</text><text x="1666.2" y="899" text-anchor="middle" fill="#fff">29</text><text x="1702.9" y="899" text-anchor="middle" fill="#fff">30</text><text x="1739.7" y="899" text-anchor="middle" fill="#fff">31</text><text x="1776.4" y="899" text-anchor="middle" fill="#fff">32</text><text transform="translate(586.5 789) rotate(-90)" text-anchor="middle" fill="#fff" font-size="12">%</text><rect x="703.3" y="883.6" width="7.3" height="0.4" fill="#00ffff"/><rect x="713.1" y="883.6" width="7.3" height="0.4" fill="#ff00ff"/><rect x="723.0" y="883.6" width="7.3" height="0.4" fill="#dfff00"/><rect x="730.2" y="883.4" width="7.3" height="0.6" fill="#000"/><rect x="740.1" y="883.0" width="7.3" height="1.0" fill="#00ffff"/><rect x="749.9" y="883.6" width="7.3" height="0.4" fill="#ff00ff"/><rect x="759.7" y="883.0" width="7.3" height="1.0" fill="#dfff00"/><rect x="767.0" y="880.2" width="7.3" height="3.8" fill="#000"/><rect x="776.8" y="883.4" width="7.3" height="0.6" fill="#00ffff"/><rect x="786.6" y="883.2" width="7.3" height="0.8" fill="#ff00ff"/><rect x="796.5" y="882.8" width="7.3" height="1.2" fill="#dfff00"/><rect x="803.8" y="875.7" width="7.3" height="8.3" fill="#000"/><rect x="813.6" y="883.0" width="7.3" height="1.0" fill="#00ffff"/><rect x="823.4" y="883.2" width="7.3" height="0.8" fill="#ff00ff"/><rect x="833.2" y="883.2" width="7.3" height="0.8" fill="#dfff00"/><rect x="840.5" y="875.9" width="7.3" height="8.1" fill="#000"/><rect x="850.3" y="883.4" width="7.3" height="0.6" fill="#00ffff"/><rect x="860.1" y="883.6" width="7.3" height="0.4" fill="#ff00ff"/><rect x="870.0" y="883.6" width="7.3" height="0.4" fill="#dfff00"/><rect x="877.2" y="880.5" width="7.3" height="3.5" fill="#000"/><rect x="887.1" y="880.2" width="7.3" height="3.8" fill="#00ffff"/><rect x="896.9" y="866.3" width="7.3" height="17.7" fill="#ff00ff"/><rect x="906.7" y="867.1" width="7.3" height="16.9" fill="#dfff00"/><rect x="914.0" y="883.8" width="7.3" height="0.2" fill="#000"/><rect x="923.8" y="866.7" width="7.3" height="17.3" fill="#00ffff"/><rect x="933.6" y="868.6" width="7.3" height="15.4" fill="#ff00ff"/><rect x="943.5" y="881.7" width="7.3" height="2.3" fill="#dfff00"/><rect x="950.8" y="883.0" width="7.3" height="1.0" fill="#000"/><rect x="960.6" y="877.9" width="7.3" height="6.1" fill="#00ffff"/><rect x="970.4" y="877.9" width="7.3" height="6.1" fill="#ff00ff"/><rect x="980.2" y="880.2" width="7.3" height="3.8" fill="#dfff00"/><rect x="987.5" y="883.2" width="7.3" height="0.8" fill="#000"/><rect x="997.3" y="872.9" width="7.3" height="11.1" fill="#00ffff"/><rect x="1007.1" y="871.7" width="7.3" height="12.3" fill="#ff00ff"/><rect x="1017.0" y="876.1" width="7.3" height="7.9" fill="#dfff00"/><rect x="1024.2" y="882.1" width="7.3" height="1.9" fill="#000"/><rect x="1034.1" y="870.9" width="7.3" height="13.1" fill="#00ffff"/><rect x="1043.9" y="868.1" width="7.3" height="15.9" fill="#ff00ff"/><rect x="1053.7" y="871.7" width="7.3" height="12.3" fill="#dfff00"/><rect x="1061.0" y="880.9" width="7.3" height="3.1" fill="#000"/><rect x="1070.8" y="868.3" width="7.3" height="15.7" fill="#00ffff"/><rect x="1080.6" y="865.2" width="7.3" height="18.8" fill="#ff00ff"/><rect x="1090.5" y="870.9" width="7.3" height="13.1" fill="#dfff00"/><rect x="1097.8" y="874.8" width="7.3" height="9.2" fill="#000"/><rect x="1107.6" y="875.6" width="7.3" height="8.4" fill="#00ffff"/><rect x="1117.4" y="871.1" width="7.3" height="12.9" fill="#ff00ff"/><rect x="1127.2" y="875.0" width="7.3" height="9.0" fill="#dfff00"/><rect x="1134.5" y="882.1" width="7.3" height="1.9" fill="#000"/><rect x="1144.3" y="866.9" width="7.3" height="17.1" fill="#00ffff"/><rect x="1154.1" y="856.5" width="7.3" height="27.5" fill="#ff00ff"/><rect x="1164.0" y="866.9" width="7.3" height="17.1" fill="#dfff00"/><rect x="1171.2" y="883.0" width="7.3" height="1.0" fill="#000"/><rect x="1181.1" y="867.9" width="7.3" height="16.1" fill="#00ffff"/><rect x="1190.9" y="868.4" width="7.3" height="15.6" fill="#ff00ff"/><rect x="1200.7" y="880.2" width="7.3" height="3.8" fill="#dfff00"/><rect x="1208.0" y="882.1" width="7.3" height="1.9" fill="#000"/><rect x="1217.8" y="879.0" width="7.3" height="5.0" fill="#00ffff"/><rect x="1227.6" y="878.0" width="7.3" height="6.0" fill="#ff00ff"/><rect x="1237.5" y="878.2" width="7.3" height="5.8" fill="#dfff00"/><rect x="1244.8" y="870.0" width="7.3" height="14.0" fill="#000"/><rect x="1254.6" y="865.2" width="7.3" height="18.8" fill="#00ffff"/><rect x="1264.4" y="860.4" width="7.3" height="23.6" fill="#ff00ff"/><rect x="1274.2" y="864.6" width="7.3" height="19.4" fill="#dfff00"/><rect x="1281.5" y="867.9" width="7.3" height="16.1" fill="#000"/><rect x="1291.3" y="866.9" width="7.3" height="17.1" fill="#00ffff"/><rect x="1301.1" y="861.5" width="7.3" height="22.5" fill="#ff00ff"/><rect x="1311.0" y="866.7" width="7.3" height="17.3" fill="#dfff00"/><rect x="1318.2" y="868.6" width="7.3" height="15.4" fill="#000"/><rect x="1328.1" y="870.8" width="7.3" height="13.2" fill="#00ffff"/><rect x="1337.9" y="865.2" width="7.3" height="18.8" fill="#ff00ff"/><rect x="1347.7" y="868.6" width="7.3" height="15.4" fill="#dfff00"/><rect x="1355.0" y="877.9" width="7.3" height="6.1" fill="#000"/><rect x="1364.8" y="879.4" width="7.3" height="4.6" fill="#00ffff"/><rect x="1374.6" y="874.0" width="7.3" height="10.0" fill="#ff00ff"/><rect x="1384.5" y="873.1" width="7.3" height="10.9" fill="#dfff00"/><rect x="1391.8" y="881.9" width="7.3" height="2.1" fill="#000"/><rect x="1401.6" y="870.2" width="7.3" height="13.8" fill="#00ffff"/><rect x="1411.4" y="866.5" width="7.3" height="17.5" fill="#ff00ff"/><rect x="1421.2" y="871.9" width="7.3" height="12.1" fill="#dfff00"/><rect x="1428.5" y="883.2" width="7.3" height="0.8" fill="#000"/><rect x="1438.3" y="875.9" width="7.3" height="8.1" fill="#00ffff"/><rect x="1448.1" y="873.8" width="7.3" height="10.2" fill="#ff00ff"/><rect x="1458.0" y="874.0" width="7.3" height="10.0" fill="#dfff00"/><rect x="1465.2" y="878.8" width="7.3" height="5.2" fill="#000"/><rect x="1475.1" y="861.9" width="7.3" height="22.1" fill="#00ffff"/><rect x="1484.9" y="857.1" width="7.3" height="26.9" fill="#ff00ff"/><rect x="1494.7" y="864.8" width="7.3" height="19.2" fill="#dfff00"/><rect x="1502.0" y="880.7" width="7.3" height="3.3" fill="#000"/><rect x="1511.8" y="866.1" width="7.3" height="17.9" fill="#00ffff"/><rect x="1521.6" y="861.5" width="7.3" height="22.5" fill="#ff00ff"/><rect x="1531.5" y="863.8" width="7.3" height="20.2" fill="#dfff00"/><rect x="1538.8" y="879.2" width="7.3" height="4.8" fill="#000"/><rect x="1548.6" y="866.1" width="7.3" height="17.9" fill="#00ffff"/><rect x="1558.4" y="861.2" width="7.3" height="22.8" fill="#ff00ff"/><rect x="1568.2" y="864.2" width="7.3" height="19.8" fill="#dfff00"/><rect x="1575.5" y="879.0" width="7.3" height="5.0" fill="#000"/><rect x="1585.3" y="864.8" width="7.3" height="19.2" fill="#00ffff"/><rect x="1595.1" y="858.3" width="7.3" height="25.7" fill="#ff00ff"/><rect x="1605.0" y="861.2" width="7.3" height="22.8" fill="#dfff00"/><rect x="1612.2" y="877.1" width="7.3" height="6.9" fill="#000"/><rect x="1622.1" y="860.6" width="7.3" height="23.4" fill="#00ffff"/><rect x="1631.9" y="848.3" width="7.3" height="35.7" fill="#ff00ff"/><rect x="1641.7" y="854.6" width="7.3" height="29.4" fill="#dfff00"/><rect x="1649.0" y="880.9" width="7.3" height="3.1" fill="#000"/><rect x="1658.8" y="863.1" width="7.3" height="20.9" fill="#00ffff"/><rect x="1668.6" y="861.0" width="7.3" height="23.0" fill="#ff00ff"/><rect x="1678.5" y="869.8" width="7.3" height="14.2" fill="#dfff00"/><rect x="1685.8" y="883.4" width="7.3" height="0.6" fill="#000"/><rect x="1695.6" y="879.8" width="7.3" height="4.2" fill="#00ffff"/><rect x="1705.4" y="879.0" width="7.3" height="5.0" fill="#ff00ff"/><rect x="1715.2" y="880.5" width="7.3" height="3.5" fill="#dfff00"/></svg>
<svg class="a" style="left:0;top:0" width="1816" height="150" viewBox="0 0 1816 150"><g transform="translate(1700 8) scale(0.0644454)"><rect x="655" y="115" width="52" height="235" fill="#a9aab0" stroke="#55565e" stroke-width="11"/><polyline points="575,180 628,235 575,290" fill="none" stroke="#55565e" stroke-width="14"/><polyline points="790,180 738,235 790,290" fill="none" stroke="#55565e" stroke-width="14"/><polygon points="940,125 1010,120 1010,300 940,290" fill="#b4b4b8" stroke="#55565e" stroke-width="11" stroke-linejoin="round" /><polygon points="1020,120 1085,118 1085,318 1020,302" fill="#b4b4b8" stroke="#55565e" stroke-width="11" stroke-linejoin="round" /><polygon points="1095,120 1170,118 1170,345 1095,322" fill="#b4b4b8" stroke="#55565e" stroke-width="11" stroke-linejoin="round" /><polygon points="1320,215 1420,175 1530,250 1520,290 1335,340" fill="#b4b4b8" stroke="#55565e" stroke-width="11" stroke-linejoin="round" /><polygon points="1410,160 1510,122 1545,210 1440,245" fill="#a4a4a9" stroke="#55565e" stroke-width="11" stroke-linejoin="round" /></g><g transform="translate(0 0) scale(0.110803)"><polygon points="520,180 570,170 610,250 640,190 655,205 620,265 580,268 545,245" fill="#fff" stroke="#111" stroke-width="10" stroke-linejoin="round" /><polygon points="585,170 625,150 655,195 625,250 605,210" fill="#7cc4ec" stroke="#111" stroke-width="9" stroke-linejoin="round" /><polygon points="525,182 575,172 605,262 550,248" fill="#fff" stroke="#111" stroke-width="9" stroke-linejoin="round" /></g><g transform="translate(0 0) scale(0.0503601)"><polygon points="292,495 335,440 415,340 560,345 562,445 485,560 292,560" fill="#0a0a0c" stroke="#0a0a0c" stroke-width="14" stroke-linejoin="round" /><defs><linearGradient id="lsg" x1="0" y1="0" x2="0" y2="1"><stop offset="0" stop-color="#9a9a9c"/><stop offset=".45" stop-color="#f4f4f4"/><stop offset="1" stop-color="#ffffff"/></linearGradient></defs><polygon points="340,472 345,440 425,348 552,352 548,385 478,472" fill="url(#lsg)" stroke="none" stroke-width="0" stroke-linejoin="round" /><polygon points="300,502 478,502 478,552 300,552" fill="#b6e7ff" stroke="none" stroke-width="0" stroke-linejoin="round" /><polygon points="484,500 555,392 555,442 484,552" fill="#1fa0e8" stroke="none" stroke-width="0" stroke-linejoin="round" /></g><g transform="translate(1710 76) scale(0.0725163)"><polygon points="487,235 712,197 770,335 735,520 600,560 560,470" fill="#fff" stroke="#000" stroke-width="13" stroke-linejoin="round" /><path d="M500 462 L545 400 Q600 350 690 375 L655 395 Q600 400 590 490 Z" fill="#8fd0ee" stroke="#000" stroke-width="11" stroke-linejoin="round"/><circle cx="760" cy="465" r="128" fill="#fff" stroke="#000" stroke-width="14"/><path d="M760 465 L752 345 A122 122 0 0 0 690 565 Z" fill="#7fccf0"/><path d="M758 360 V465 L835 488" fill="none" stroke="#000" stroke-width="15"/><circle cx="758" cy="465" r="14" fill="#000"/><polygon points="1075,308 1160,308 1117,375" fill="#45464e" stroke="none" stroke-width="0" stroke-linejoin="round" /></g></svg>
<div class="red" style="left:97px;top:249px;width:230px;height:71px"></div>
<div class="num" style="left:58.5px;top:284.5px">1</div>
<div class="red" style="left:343px;top:145px;width:588px;height:33px"></div>
<div class="num" style="left:930px;top:143.5px">3</div>
<div class="red" style="left:343px;top:910px;width:60px;height:37px"></div>
<div class="num" style="left:395.5px;top:910px">4</div>
<div class="red" style="left:1583px;top:953px;width:122px;height:30px"></div>
<div class="num" style="left:1582px;top:919px">2</div>
</body></html>
